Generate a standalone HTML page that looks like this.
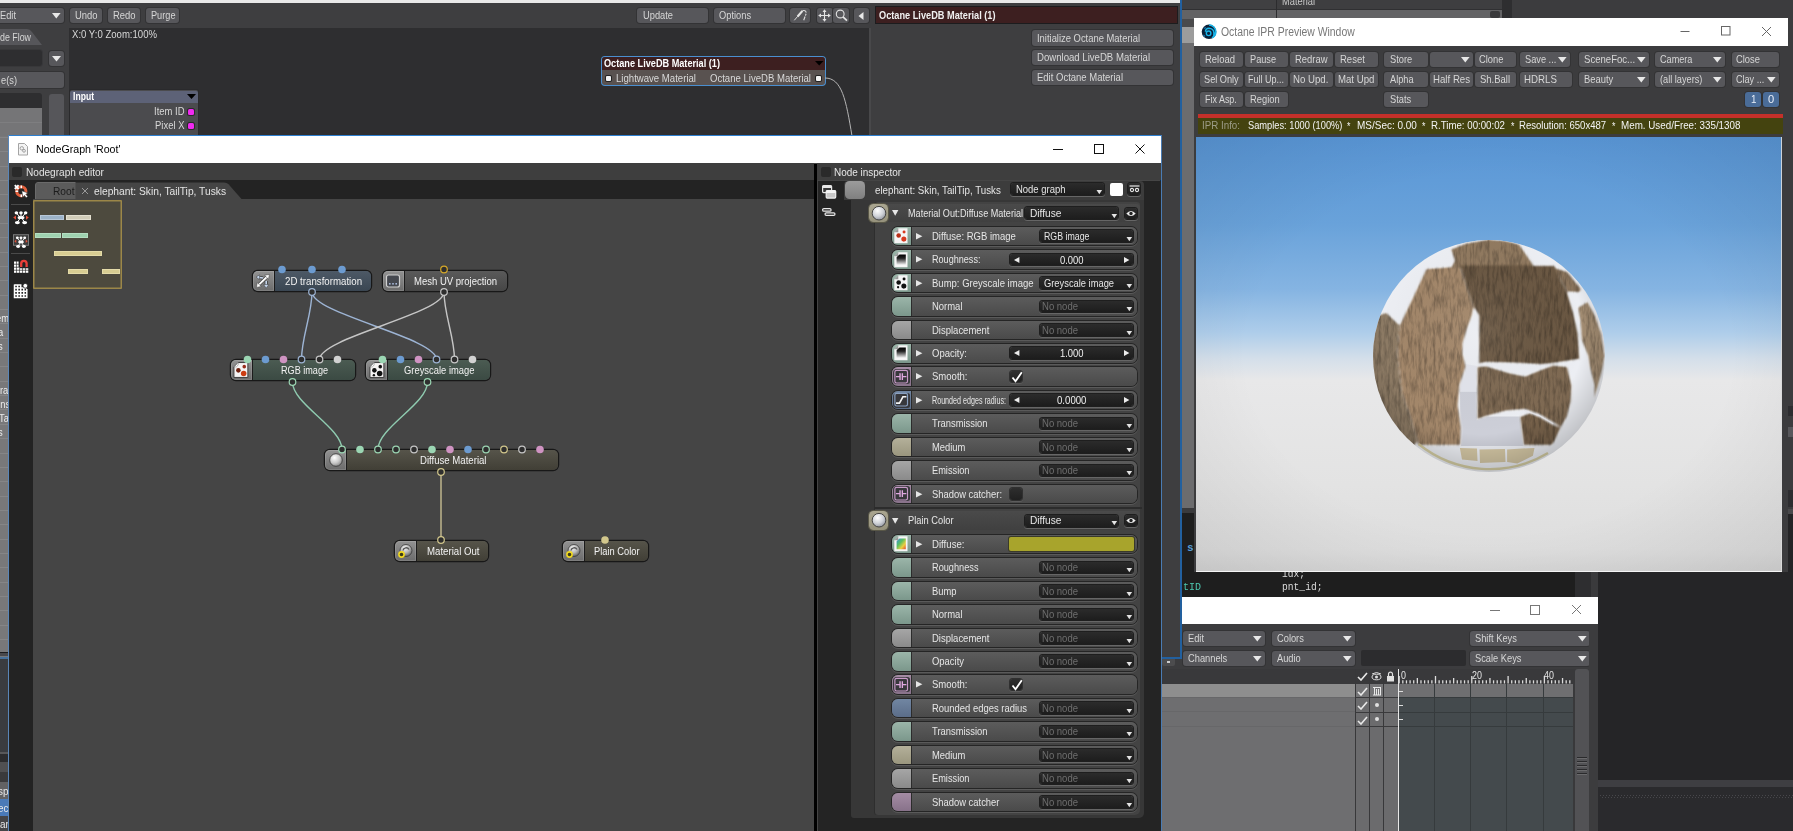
<!DOCTYPE html>
<html><head><meta charset="utf-8"><title>NodeGraph</title>
<style>
html,body{margin:0;padding:0;background:#3c3c3e;overflow:hidden}
html{width:1793px;height:831px}
body{width:1793px;height:831px;position:relative;overflow:hidden;font-family:"Liberation Sans",sans-serif;font-size:11px;color:#ddd}
.a{position:absolute;display:block}
.t{position:absolute;white-space:pre;transform-origin:0 50%}
</style></head><body>
<div class="a" style="left:1182px;top:0px;width:611px;height:831px;background:#3c3c3e;"></div>
<div class="a" style="left:1182px;top:0px;width:94px;height:8.5px;background:#404042;"></div>
<div class="a" style="left:1276px;top:0px;width:226px;height:8.5px;background:#3e3e40;"></div>
<div class="a" style="left:1182px;top:8.5px;width:320px;height:1px;background:#303032;"></div>
<div class="a" style="left:1182px;top:9.5px;width:320px;height:9px;background:#636365;"></div>
<div class="a" style="left:1276px;top:0px;width:1px;height:19px;background:#2c2c2e;"></div>
<div class="a" style="left:1490px;top:11px;width:10px;height:7px;background:#3a3a3c;border-radius:2px;"></div>
<div class="a" style="left:1502px;top:0px;width:10px;height:19px;background:#2e2e30;"></div>
<span class="t" style="left:1282px;top:-6.28px;font-size:11px;line-height:15px;color:#c8c8c8;transform:scaleX(0.845);">Material</span>
<div class="a" style="left:1182px;top:19px;width:12px;height:8px;background:#4a4a4c;"></div>
<div class="a" style="left:1182px;top:27px;width:12px;height:16px;background:#9c9c9c;"></div>
<div class="a" style="left:1182px;top:43px;width:12px;height:465px;background:#6c6c6e;"></div>
<div class="a" style="left:1182px;top:508px;width:12px;height:5px;background:#3a3a3c;"></div>
<div class="a" style="left:1182px;top:513px;width:14px;height:85px;background:#1e1e1e;"></div>
<div class="a" style="left:1182px;top:572px;width:408px;height:26px;background:#1e1e1e;"></div>
<div class="a" style="left:1575px;top:572px;width:16px;height:26px;background:#2e2e30;"></div>
<div class="a" style="left:1591px;top:572px;width:7px;height:26px;background:#3a3a3c;"></div>
<span class="t" style="left:1187px;top:540.72px;font-size:11px;line-height:15px;color:#569cd6;font-family:'Liberation Mono',monospace;font-weight:bold;">s</span>
<span class="t" style="left:1182.5px;top:580.22px;font-size:11px;line-height:15px;color:#4ec9b0;font-family:'Liberation Mono',monospace;transform:scaleX(0.909);">tID</span>
<span class="t" style="left:1281.5px;top:566.72px;font-size:11px;line-height:15px;color:#dcdcdc;font-family:'Liberation Mono',monospace;transform:scaleX(0.871);">idx;</span>
<span class="t" style="left:1281.5px;top:580.22px;font-size:11px;line-height:15px;color:#dcdcdc;font-family:'Liberation Mono',monospace;transform:scaleX(0.876);">pnt_id;</span>
<div class="a" style="left:1788px;top:406px;width:5px;height:10px;background:#2d2d30;"></div>
<div class="a" style="left:1788px;top:427px;width:5px;height:10px;background:#58585c;"></div>
<div class="a" style="left:1788px;top:490px;width:5px;height:17px;background:#2d2d30;"></div>
<div class="a" style="left:1788px;top:508.5px;width:5px;height:5.5px;background:#4a4a4c;"></div>
<div class="a" style="left:1788px;top:514px;width:5px;height:60px;background:#242426;"></div>
<div class="a" style="left:1598px;top:572px;width:195px;height:259px;background:#252527;"></div>
<div class="a" style="left:1598px;top:779.5px;width:195px;height:7px;background:#3e3e42;"></div>
<div class="a" style="left:1598px;top:786.5px;width:195px;height:44.5px;background:#2a2a2d;"></div>
<div class="a" style="left:1600px;top:795px;width:193px;height:1px;background:transparent;background-image:repeating-linear-gradient(90deg,#47474b 0 1px,transparent 1px 3px);"></div>
<div class="a" style="left:1601.5px;top:797px;width:191.5px;height:1px;background:transparent;background-image:repeating-linear-gradient(90deg,#47474b 0 1px,transparent 1px 3px);"></div>
<div class="a" style="left:1150px;top:597px;width:448px;height:234px;background:#3c3c3e;"></div>
<div class="a" style="left:1150px;top:597px;width:448px;height:27px;background:#fff;"></div>
<svg class="a" style="left:1480px;top:600px" width="110" height="20"><g stroke="#777" stroke-width="1" fill="none"><path d="M10 10.5H20"/><rect x="50.5" y="5.5" width="9" height="9"/><path d="M92 5L101 14M101 5L92 14"/></g></svg>
<div class="a" style="left:1182.5px;top:631px;width:82px;height:15px;background:#57575b;border-radius:3px;box-shadow:0 0 0 1px #333335;"></div><span class="t" style="left:1187.5px;top:631.27px;font-size:11px;line-height:15px;color:#d6d6d6;transform:scaleX(0.845);">Edit</span><svg class="a" style="left:1252.6px;top:636.1px" width="9" height="6"><path d="M0 0H8.600L4.300 5.400Z" fill="#e8e8e8"/></svg>
<div class="a" style="left:1272px;top:631px;width:82.5px;height:15px;background:#57575b;border-radius:3px;box-shadow:0 0 0 1px #333335;"></div><span class="t" style="left:1277px;top:631.27px;font-size:11px;line-height:15px;color:#d6d6d6;transform:scaleX(0.845);">Colors</span><svg class="a" style="left:1342.6px;top:636.1px" width="9" height="6"><path d="M0 0H8.600L4.300 5.400Z" fill="#e8e8e8"/></svg>
<div class="a" style="left:1470px;top:631px;width:120px;height:15px;background:#57575b;border-radius:3px;box-shadow:0 0 0 1px #333335;"></div><span class="t" style="left:1475px;top:631.27px;font-size:11px;line-height:15px;color:#d6d6d6;transform:scaleX(0.845);">Shift Keys</span><svg class="a" style="left:1578.1px;top:636.1px" width="9" height="6"><path d="M0 0H8.600L4.300 5.400Z" fill="#e8e8e8"/></svg>
<div class="a" style="left:1182.5px;top:651px;width:82px;height:15px;background:#57575b;border-radius:3px;box-shadow:0 0 0 1px #333335;"></div><span class="t" style="left:1187.5px;top:651.27px;font-size:11px;line-height:15px;color:#d6d6d6;transform:scaleX(0.845);">Channels</span><svg class="a" style="left:1252.6px;top:656.1px" width="9" height="6"><path d="M0 0H8.600L4.300 5.400Z" fill="#e8e8e8"/></svg>
<div class="a" style="left:1272px;top:651px;width:82.5px;height:15px;background:#57575b;border-radius:3px;box-shadow:0 0 0 1px #333335;"></div><span class="t" style="left:1277px;top:651.27px;font-size:11px;line-height:15px;color:#d6d6d6;transform:scaleX(0.845);">Audio</span><svg class="a" style="left:1342.6px;top:656.1px" width="9" height="6"><path d="M0 0H8.600L4.300 5.400Z" fill="#e8e8e8"/></svg>
<div class="a" style="left:1470px;top:651px;width:120px;height:15px;background:#57575b;border-radius:3px;box-shadow:0 0 0 1px #333335;"></div><span class="t" style="left:1475px;top:651.27px;font-size:11px;line-height:15px;color:#d6d6d6;transform:scaleX(0.845);">Scale Keys</span><svg class="a" style="left:1578.1px;top:656.1px" width="9" height="6"><path d="M0 0H8.600L4.300 5.400Z" fill="#e8e8e8"/></svg>
<div class="a" style="left:1361px;top:650px;width:105px;height:16px;background:#2c2c2e;border-radius:2px;"></div>
<div class="a" style="left:1162px;top:655px;width:13px;height:11px;background:#4c4c4e;border-radius:2px;"></div>
<div class="a" style="left:1167px;top:661px;width:3px;height:2px;background:#ccc;"></div>
<div class="a" style="left:1162px;top:669px;width:436px;height:162px;background:#39393b;"></div>
<div class="a" style="left:1162px;top:684px;width:194px;height:147px;background:#6e6e70;"></div>
<div class="a" style="left:1162px;top:684px;width:194px;height:13.5px;background:#8e8e8e;"></div>
<div class="a" style="left:1162px;top:697px;width:194px;height:1px;background:#676769;"></div>
<div class="a" style="left:1162px;top:711px;width:194px;height:1px;background:#676769;"></div>
<div class="a" style="left:1162px;top:726px;width:194px;height:1px;background:#676769;"></div>
<div class="a" style="left:1356px;top:684px;width:41.5px;height:147px;background:#6b6b6d;"></div>
<div class="a" style="left:1356px;top:684px;width:41.5px;height:13.5px;background:#757577;"></div>
<div class="a" style="left:1356px;top:697px;width:41.5px;height:1px;background:#3a3a3c;"></div>
<div class="a" style="left:1356px;top:711.5px;width:41.5px;height:1px;background:#3a3a3c;"></div>
<div class="a" style="left:1356px;top:726px;width:41.5px;height:1px;background:#3a3a3c;"></div>
<div class="a" style="left:1355px;top:669px;width:1px;height:162px;background:#38383a;"></div>
<div class="a" style="left:1369px;top:669px;width:1px;height:162px;background:#38383a;"></div>
<div class="a" style="left:1383px;top:669px;width:1px;height:162px;background:#38383a;"></div>
<div class="a" style="left:1398px;top:684px;width:174.5px;height:147px;background:#444a4d;"></div>
<div class="a" style="left:1398px;top:684px;width:174.5px;height:13.5px;background:#6f6f71;"></div>
<div class="a" style="left:1433.8px;top:684px;width:1px;height:147px;background:#363b3d;"></div>
<div class="a" style="left:1470.1px;top:684px;width:1px;height:147px;background:#363b3d;"></div>
<div class="a" style="left:1506.4px;top:684px;width:1px;height:147px;background:#363b3d;"></div>
<div class="a" style="left:1542.7px;top:684px;width:1px;height:147px;background:#363b3d;"></div>
<div class="a" style="left:1398px;top:697px;width:174.5px;height:1px;background:#363b3d;"></div>
<div class="a" style="left:1398px;top:711.5px;width:174.5px;height:1px;background:#363b3d;"></div>
<div class="a" style="left:1398px;top:726px;width:174.5px;height:1px;background:#363b3d;"></div>
<div class="a" style="left:1397.5px;top:669px;width:1.5px;height:162px;background:#e8e8e8;"></div>
<svg class="a" style="left:1398px;top:669px" width="174.500" height="15"><g stroke="#dcdcdc" stroke-width="1.300"><path d="M1.2 7V14.500"/><path d="M4.83 11.3V14.500"/><path d="M8.46 11.3V14.500"/><path d="M12.09 11.3V14.500"/><path d="M15.72 11.3V14.500"/><path d="M19.35 9V14.500"/><path d="M22.98 11.3V14.500"/><path d="M26.61 11.3V14.500"/><path d="M30.24 11.3V14.500"/><path d="M33.87 11.3V14.500"/><path d="M37.5 7V14.500"/><path d="M41.13 11.3V14.500"/><path d="M44.76 11.3V14.500"/><path d="M48.39 11.3V14.500"/><path d="M52.02 11.3V14.500"/><path d="M55.65 9V14.500"/><path d="M59.28 11.3V14.500"/><path d="M62.91 11.3V14.500"/><path d="M66.54 11.3V14.500"/><path d="M70.17 11.3V14.500"/><path d="M73.8 7V14.500"/><path d="M77.43 11.3V14.500"/><path d="M81.06 11.3V14.500"/><path d="M84.69 11.3V14.500"/><path d="M88.32 11.3V14.500"/><path d="M91.95 9V14.500"/><path d="M95.58 11.3V14.500"/><path d="M99.21 11.3V14.500"/><path d="M102.84 11.3V14.500"/><path d="M106.47 11.3V14.500"/><path d="M110.1 7V14.500"/><path d="M113.73 11.3V14.500"/><path d="M117.36 11.3V14.500"/><path d="M120.99 11.3V14.500"/><path d="M124.62 11.3V14.500"/><path d="M128.25 9V14.500"/><path d="M131.88 11.3V14.500"/><path d="M135.51 11.3V14.500"/><path d="M139.14 11.3V14.500"/><path d="M142.77 11.3V14.500"/><path d="M146.4 7V14.500"/><path d="M150.03 11.3V14.500"/><path d="M153.66 11.3V14.500"/><path d="M157.29 11.3V14.500"/><path d="M160.92 11.3V14.500"/><path d="M164.55 9V14.500"/><path d="M168.18 11.3V14.500"/><path d="M171.81 11.3V14.500"/></g></svg>
<span class="t" style="left:1401px;top:668.36px;font-size:10.5px;line-height:14.5px;color:#e4e4e4;transform:scaleX(0.850);">0</span>
<span class="t" style="left:1472.2px;top:668.36px;font-size:10.5px;line-height:14.5px;color:#e4e4e4;transform:scaleX(0.850);">20</span>
<span class="t" style="left:1544px;top:668.36px;font-size:10.5px;line-height:14.5px;color:#e4e4e4;transform:scaleX(0.850);">40</span>
<svg class="a" style="left:1357px;top:672px" width="11" height="9"><path d="M1 5L4 8L10 1" stroke="#e8e8e8" stroke-width="1.6" fill="none"/></svg>
<svg class="a" style="left:1357px;top:686.5px" width="11" height="9"><path d="M1 5L4 8L10 1" stroke="#e8e8e8" stroke-width="1.6" fill="none"/></svg>
<svg class="a" style="left:1357px;top:701px" width="11" height="9"><path d="M1 5L4 8L10 1" stroke="#e8e8e8" stroke-width="1.6" fill="none"/></svg>
<svg class="a" style="left:1357px;top:715.5px" width="11" height="9"><path d="M1 5L4 8L10 1" stroke="#e8e8e8" stroke-width="1.6" fill="none"/></svg>
<svg class="a" style="left:1371px;top:672px" width="11" height="9"><ellipse cx="5.5" cy="5" rx="4.5" ry="2.8" fill="none" stroke="#ddd" stroke-width="1"/><circle cx="5.5" cy="5" r="1.5" fill="#ddd"/><path d="M1 2Q5.5 -1 10 2" stroke="#ddd" fill="none"/></svg>
<svg class="a" style="left:1386px;top:671px" width="9" height="11"><rect x="1" y="5" width="7" height="5.5" fill="#e0e0e0"/><path d="M2.5 5V3.2A2 2 0 0 1 6.5 3.2V5" stroke="#e0e0e0" fill="none" stroke-width="1.2"/></svg>
<svg class="a" style="left:1372px;top:686px" width="10" height="10"><path d="M1 1.5H9M2.5 1.5V9M4.5 3V9M6.5 3V9M8.5 1.5V9M1 9H9" stroke="#e8e8e8" fill="none"/></svg>
<div class="a" style="left:1374.5px;top:702.5px;width:4px;height:4px;background:#e0e0e0;border-radius:2px;"></div>
<div class="a" style="left:1374.5px;top:717px;width:4px;height:4px;background:#e0e0e0;border-radius:2px;"></div>
<div class="a" style="left:1399px;top:690.5px;width:4px;height:1px;background:#ddd;"></div>
<div class="a" style="left:1399px;top:704.5px;width:4px;height:1px;background:#ddd;"></div>
<div class="a" style="left:1399px;top:719px;width:4px;height:1px;background:#ddd;"></div>
<div class="a" style="left:1575px;top:669px;width:14px;height:162px;background:#525255;border-radius:3px 3px 0 0;"></div>
<div class="a" style="left:1577px;top:757px;width:10px;height:1px;background:#2a2a2c;"></div>
<div class="a" style="left:1577px;top:758px;width:10px;height:1px;background:#6a6a6c;"></div>
<div class="a" style="left:1577px;top:761px;width:10px;height:1px;background:#2a2a2c;"></div>
<div class="a" style="left:1577px;top:762px;width:10px;height:1px;background:#6a6a6c;"></div>
<div class="a" style="left:1577px;top:765px;width:10px;height:1px;background:#2a2a2c;"></div>
<div class="a" style="left:1577px;top:766px;width:10px;height:1px;background:#6a6a6c;"></div>
<div class="a" style="left:1577px;top:769px;width:10px;height:1px;background:#2a2a2c;"></div>
<div class="a" style="left:1577px;top:770px;width:10px;height:1px;background:#6a6a6c;"></div>
<div class="a" style="left:1577px;top:773px;width:10px;height:1px;background:#2a2a2c;"></div>
<div class="a" style="left:1577px;top:774px;width:10px;height:1px;background:#6a6a6c;"></div>
<div class="a" style="left:1589px;top:624px;width:9px;height:207px;background:#3c3c3e;"></div>
<div class="a" style="left:0px;top:0px;width:1182px;height:659px;background:#3e3e40;"></div>
<div class="a" style="left:0px;top:0px;width:1181px;height:2.5px;background:#e9e9e9;"></div>
<div class="a" style="left:1180px;top:0px;width:2px;height:659px;background:#22609f;"></div>
<div class="a" style="left:0px;top:656.5px;width:1182px;height:2.5px;background:#22609f;"></div>
<div class="a" style="left:69px;top:28px;width:800px;height:630px;background:#2e2e30;"></div>
<div class="a" style="left:869px;top:28px;width:2px;height:630px;background:#48484a;"></div>
<span class="t" style="left:72px;top:27.22px;font-size:11px;line-height:15px;color:#d8d8d8;transform:scaleX(0.871);">X:0 Y:0 Zoom:100%</span>
<div class="a" style="left:-3px;top:8px;width:67px;height:15px;background:#57575b;border-radius:3px;box-shadow:0 0 0 1px #333335;"></div><span class="t" style="left:0px;top:8.27px;font-size:11px;line-height:15px;color:#d6d6d6;transform:scaleX(0.845);">Edit</span><svg class="a" style="left:52.1px;top:13.1px" width="9" height="6"><path d="M0 0H8.600L4.300 5.400Z" fill="#e8e8e8"/></svg>
<div class="a" style="left:70px;top:8px;width:32px;height:15px;background:#57575b;border-radius:3px;box-shadow:0 0 0 1px #333335;"></div><span class="t" style="left:75px;top:8.27px;font-size:11px;line-height:15px;color:#d6d6d6;transform:scaleX(0.856);">Undo</span>
<div class="a" style="left:108px;top:8px;width:32px;height:15px;background:#57575b;border-radius:3px;box-shadow:0 0 0 1px #333335;"></div><span class="t" style="left:113px;top:8.27px;font-size:11px;line-height:15px;color:#d6d6d6;transform:scaleX(0.856);">Redo</span>
<div class="a" style="left:146px;top:8px;width:33px;height:15px;background:#57575b;border-radius:3px;box-shadow:0 0 0 1px #333335;"></div><span class="t" style="left:151px;top:8.27px;font-size:11px;line-height:15px;color:#d6d6d6;transform:scaleX(0.834);">Purge</span>
<svg class="a" style="left:0;top:29px" width="44" height="17"><path d="M0 0H27Q30 0 32 3L42 16H0Z" fill="#56565a"/></svg>
<span class="t" style="left:-0.5px;top:29.72px;font-size:11px;line-height:15px;color:#d6d6d6;transform:scaleX(0.805);">de Flow</span>
<div class="a" style="left:-3px;top:50px;width:45px;height:16px;background:#2e2e30;border-radius:3px;box-shadow:0 0 0 1px #38383a;"></div>
<div class="a" style="left:49px;top:51px;width:15px;height:15px;background:#57575b;border-radius:3px;box-shadow:0 0 0 1px #333335;"></div>
<svg class="a" style="left:52px;top:56px" width="9" height="6"><path d="M0 0H9L4.5 5.5Z" fill="#e8e8e8"/></svg>
<div class="a" style="left:-3px;top:72px;width:67px;height:16px;background:#57575b;border-radius:3px;box-shadow:0 0 0 1px #333335;"></div><span class="t" style="left:0.5px;top:72.77px;font-size:11px;line-height:15px;color:#d6d6d6;transform:scaleX(0.845);">e(s)</span>
<div class="a" style="left:-3px;top:93px;width:45px;height:45px;background:#2e2e30;border-radius:3px 3px 0 0;"></div>
<div class="a" style="left:0px;top:108px;width:42px;height:30px;background:#757577;"></div>
<div class="a" style="left:0px;top:122px;width:42px;height:1px;background:#7e7e80;"></div>
<div class="a" style="left:49px;top:94px;width:15px;height:44px;background:#56565a;border-radius:3px 3px 0 0;"></div>
<div class="a" style="left:70px;top:90px;width:127.5px;height:48px;background:#4b4b4e;border-radius:2px;box-shadow:0 0 0 1px #2a2a2c;"></div>
<div class="a" style="left:70px;top:91px;width:127.5px;height:11.5px;background:#5d6277;border-radius:2px 2px 0 0;"></div>
<span class="t" style="left:72.5px;top:89.22px;font-size:11px;line-height:15px;color:#fff;font-weight:bold;transform:scaleX(0.781);">Input</span>
<svg class="a" style="left:186.5px;top:94px" width="9" height="6"><path d="M0 0H9L4.5 5Z" fill="#000"/></svg>
<span class="t" style="left:154px;top:103.72px;font-size:11px;line-height:15px;color:#d8d8d8;transform:scaleX(0.860);">Item ID</span>
<span class="t" style="left:155px;top:117.72px;font-size:11px;line-height:15px;color:#d8d8d8;transform:scaleX(0.861);">Pixel X</span>
<div class="a" style="left:188px;top:108.5px;width:6px;height:6px;background:#f02af0;border-radius:1.5px;box-shadow:0 0 0 1px #2a2a2c;"></div>
<div class="a" style="left:188px;top:122.5px;width:6px;height:6px;background:#f02af0;border-radius:1.5px;box-shadow:0 0 0 1px #2a2a2c;"></div>
<div class="a" style="left:637px;top:8px;width:70.5px;height:15px;background:#57575b;border-radius:3px;box-shadow:0 0 0 1px #333335;"></div><span class="t" style="left:643px;top:8.27px;font-size:11px;line-height:15px;color:#d6d6d6;transform:scaleX(0.845);">Update</span>
<div class="a" style="left:714px;top:8px;width:70.5px;height:15px;background:#57575b;border-radius:3px;box-shadow:0 0 0 1px #333335;"></div><span class="t" style="left:719px;top:8.27px;font-size:11px;line-height:15px;color:#d6d6d6;transform:scaleX(0.845);">Options</span>
<div class="a" style="left:790px;top:8px;width:20px;height:15px;background:#57575b;border-radius:3px;box-shadow:0 0 0 1px #333335;"></div>
<svg class="a" style="left:793px;top:9px" width="15" height="13"><path d="M1.300 11.300L4.800 7.200" stroke="#dcdcdc" stroke-width="1" fill="none"/><path d="M4.600 7.500L9.400 1.900" stroke="#e4e4e4" stroke-width="2.200" fill="none"/><path d="M9.400 1.700Q13 0.600 13.300 4.200L10.700 11.200" stroke="#dcdcdc" stroke-width="1.100" fill="none" stroke-dasharray="5 1 2 1"/></svg>
<div class="a" style="left:816.5px;top:8px;width:16px;height:15px;background:#57575b;border-radius:3px;box-shadow:0 0 0 1px #333335;"></div>
<svg class="a" style="left:818px;top:9px" width="13" height="13"><path d="M6.500 1.500V11.500M1.500 6.500H11.500" stroke="#e4e4e4" stroke-width="1.100"/><path d="M6.500 0.200L4.500 3H8.500ZM6.500 12.800L4.500 10H8.500ZM0.200 6.500L3 4.500V8.500ZM12.800 6.500L10 4.500V8.500Z" fill="#e4e4e4"/></svg>
<div class="a" style="left:833px;top:8px;width:16px;height:15px;background:#57575b;border-radius:3px;box-shadow:0 0 0 1px #333335;"></div>
<svg class="a" style="left:834.500px;top:9px" width="13" height="13"><circle cx="5.200" cy="5" r="3.900" stroke="#e0e0e0" stroke-width="1.100" fill="none"/><path d="M8 7.900L12 11.600" stroke="#e4e4e4" stroke-width="1.700"/></svg>
<div class="a" style="left:854px;top:8px;width:15px;height:15px;background:#57575b;border-radius:3px;box-shadow:0 0 0 1px #333335;"></div>
<svg class="a" style="left:858px;top:11.500px" width="6" height="9"><path d="M5.500 0V8L0.500 4Z" fill="#e8e8e8"/></svg>
<div class="a" style="left:875.7px;top:7.3px;width:301.3px;height:16px;background:#3d1f20;box-shadow:0 0 0 1px #1c1c1e;"></div>
<span class="t" style="left:879px;top:7.72px;font-size:11px;line-height:15px;color:#f0f0f0;font-weight:bold;transform:scaleX(0.836);">Octane LiveDB Material (1)</span>
<div class="a" style="left:1031.5px;top:30px;width:141.5px;height:15.5px;background:#57575b;border-radius:3px;box-shadow:0 0 0 1px #333335;"></div><span class="t" style="left:1037px;top:30.52px;font-size:11px;line-height:15px;color:#d6d6d6;transform:scaleX(0.855);">Initialize Octane Material</span>
<div class="a" style="left:1031.5px;top:49.7px;width:141.5px;height:15.5px;background:#57575b;border-radius:3px;box-shadow:0 0 0 1px #333335;"></div><span class="t" style="left:1037px;top:50.22px;font-size:11px;line-height:15px;color:#d6d6d6;transform:scaleX(0.872);">Download LiveDB Material</span>
<div class="a" style="left:1031.5px;top:69.8px;width:141.5px;height:15.5px;background:#57575b;border-radius:3px;box-shadow:0 0 0 1px #333335;"></div><span class="t" style="left:1037px;top:70.32px;font-size:11px;line-height:15px;color:#d6d6d6;transform:scaleX(0.863);">Edit Octane Material</span>
<div class="a" style="left:601.5px;top:56.5px;width:223px;height:28px;background:#595250;border-radius:3px;box-shadow:0 0 0 1px #4a8fd0;"></div>
<div class="a" style="left:601.5px;top:56.5px;width:223px;height:13.5px;background:#3d1f20;border-radius:3px 3px 0 0;"></div>
<span class="t" style="left:604px;top:56.02px;font-size:11px;line-height:15px;color:#fff;font-weight:bold;transform:scaleX(0.832);">Octane LiveDB Material (1)</span>
<svg class="a" style="left:814.5px;top:61px" width="9" height="5"><path d="M0 0H8.5L4.2 4.5Z" fill="#000"/></svg>
<span class="t" style="left:615.5px;top:70.72px;font-size:11px;line-height:15px;color:#d8d8d8;transform:scaleX(0.872);">Lightwave Material</span>
<span class="t" style="left:710px;top:70.72px;font-size:11px;line-height:15px;color:#d8d8d8;transform:scaleX(0.869);">Octane LiveDB Material</span>
<div class="a" style="left:605.5px;top:75.5px;width:5px;height:5px;background:#f2f2f2;border-radius:1px;box-shadow:0 0 0 1px #222;"></div>
<div class="a" style="left:816px;top:75.5px;width:5px;height:5px;background:#f2f2f2;border-radius:1px;box-shadow:0 0 0 1px #222;"></div>
<svg class="a" style="left:820px;top:70px" width="40" height="70"><path d="M5 8C22 8 26 30 32 66" stroke="#b4b4b4" stroke-width="1" fill="none"/></svg>
<div class="a" style="left:0px;top:136px;width:9px;height:521px;background:#78787a;"></div>
<div class="a" style="left:0px;top:136.8px;width:9px;height:1px;background:#858587;"></div>
<div class="a" style="left:0px;top:151.15px;width:9px;height:1px;background:#858587;"></div>
<div class="a" style="left:0px;top:165.5px;width:9px;height:1px;background:#858587;"></div>
<div class="a" style="left:0px;top:179.85px;width:9px;height:1px;background:#858587;"></div>
<div class="a" style="left:0px;top:194.2px;width:9px;height:1px;background:#858587;"></div>
<div class="a" style="left:0px;top:208.55px;width:9px;height:1px;background:#858587;"></div>
<div class="a" style="left:0px;top:222.9px;width:9px;height:1px;background:#858587;"></div>
<div class="a" style="left:0px;top:237.25px;width:9px;height:1px;background:#858587;"></div>
<div class="a" style="left:0px;top:251.6px;width:9px;height:1px;background:#858587;"></div>
<div class="a" style="left:0px;top:265.95px;width:9px;height:1px;background:#858587;"></div>
<div class="a" style="left:0px;top:280.3px;width:9px;height:1px;background:#858587;"></div>
<div class="a" style="left:0px;top:294.65px;width:9px;height:1px;background:#858587;"></div>
<div class="a" style="left:0px;top:309px;width:9px;height:1px;background:#858587;"></div>
<div class="a" style="left:0px;top:323.35px;width:9px;height:1px;background:#858587;"></div>
<div class="a" style="left:0px;top:337.7px;width:9px;height:1px;background:#858587;"></div>
<div class="a" style="left:0px;top:352.05px;width:9px;height:1px;background:#858587;"></div>
<div class="a" style="left:0px;top:366.4px;width:9px;height:1px;background:#858587;"></div>
<div class="a" style="left:0px;top:380.75px;width:9px;height:1px;background:#858587;"></div>
<div class="a" style="left:0px;top:395.1px;width:9px;height:1px;background:#858587;"></div>
<div class="a" style="left:0px;top:409.45px;width:9px;height:1px;background:#858587;"></div>
<div class="a" style="left:0px;top:423.8px;width:9px;height:1px;background:#858587;"></div>
<div class="a" style="left:0px;top:438.15px;width:9px;height:1px;background:#858587;"></div>
<div class="a" style="left:0px;top:452.5px;width:9px;height:1px;background:#858587;"></div>
<div class="a" style="left:0px;top:466.85px;width:9px;height:1px;background:#858587;"></div>
<div class="a" style="left:0px;top:481.2px;width:9px;height:1px;background:#858587;"></div>
<div class="a" style="left:0px;top:495.55px;width:9px;height:1px;background:#858587;"></div>
<div class="a" style="left:0px;top:509.9px;width:9px;height:1px;background:#858587;"></div>
<div class="a" style="left:0px;top:524.25px;width:9px;height:1px;background:#858587;"></div>
<div class="a" style="left:0px;top:538.6px;width:9px;height:1px;background:#858587;"></div>
<div class="a" style="left:0px;top:552.95px;width:9px;height:1px;background:#858587;"></div>
<div class="a" style="left:0px;top:567.3px;width:9px;height:1px;background:#858587;"></div>
<div class="a" style="left:0px;top:581.65px;width:9px;height:1px;background:#858587;"></div>
<div class="a" style="left:0px;top:596px;width:9px;height:1px;background:#858587;"></div>
<div class="a" style="left:0px;top:610.35px;width:9px;height:1px;background:#858587;"></div>
<div class="a" style="left:0px;top:624.7px;width:9px;height:1px;background:#858587;"></div>
<div class="a" style="left:0px;top:639.05px;width:9px;height:1px;background:#858587;"></div>
<div class="a" style="left:0px;top:653.4px;width:9px;height:1px;background:#858587;"></div>
<span class="t" style="left:-4.49px;top:310.72px;font-size:11px;line-height:15px;color:#ececec;transform:scaleX(0.850);">em</span>
<span class="t" style="left:-2.01px;top:324.72px;font-size:11px;line-height:15px;color:#ececec;transform:scaleX(0.850);">a</span>
<span class="t" style="left:-1.88px;top:339.22px;font-size:11px;line-height:15px;color:#ececec;transform:scaleX(0.850);">s</span>
<span class="t" style="left:0.19px;top:382.72px;font-size:11px;line-height:15px;color:#ececec;transform:scaleX(0.850);">ra</span>
<span class="t" style="left:-5.09px;top:396.72px;font-size:11px;line-height:15px;color:#ececec;transform:scaleX(0.850);">ons</span>
<span class="t" style="left:-1.38px;top:410.72px;font-size:11px;line-height:15px;color:#ececec;transform:scaleX(0.850);">Ta</span>
<span class="t" style="left:-1.88px;top:425.22px;font-size:11px;line-height:15px;color:#ececec;transform:scaleX(0.850);">s</span>
<div class="a" style="left:0px;top:652px;width:9px;height:1.1px;background:#1c1c1e;"></div>
<div class="a" style="left:0px;top:653.1px;width:9px;height:3.4px;background:#48484c;"></div>
<div class="a" style="left:0px;top:656.5px;width:9px;height:2.4px;background:#46719c;"></div>
<div class="a" style="left:0px;top:659px;width:9px;height:172px;background:#3a3c40;"></div>
<div class="a" style="left:0px;top:752px;width:9px;height:2px;background:#58585a;"></div>
<div class="a" style="left:0px;top:754px;width:9px;height:8px;background:#2c2c2e;"></div>
<div class="a" style="left:0px;top:762px;width:9px;height:10px;background:#505052;"></div>
<div class="a" style="left:0px;top:772px;width:9px;height:10px;background:#3a3a3c;"></div>
<div class="a" style="left:0px;top:782px;width:9px;height:17px;background:#626264;"></div>
<div class="a" style="left:0px;top:799px;width:9px;height:17px;background:#4a7ab8;"></div>
<div class="a" style="left:0px;top:816px;width:9px;height:15px;background:#454547;"></div>
<span class="t" style="left:-1.96px;top:783.72px;font-size:11px;line-height:15px;color:#e8e8e8;transform:scaleX(0.900);">sp</span>
<span class="t" style="left:-1.96px;top:800.72px;font-size:11px;line-height:15px;color:#e8e8e8;transform:scaleX(0.900);">ec</span>
<span class="t" style="left:-0.3px;top:816.72px;font-size:11px;line-height:15px;color:#e8e8e8;transform:scaleX(0.900);">ar</span>
<div class="a" style="left:8px;top:135px;width:1154px;height:696px;background:#454545;box-shadow:0 0 0 0 #000;"></div>
<div class="a" style="left:8px;top:135px;width:1154px;height:1px;background:#2d7fd0;"></div>
<div class="a" style="left:7.8px;top:135px;width:1.3px;height:696px;background:#5a86b8;"></div>
<div class="a" style="left:9px;top:163px;width:1.2px;height:668px;background:#0e2c4e;"></div>
<div class="a" style="left:1159.8px;top:163px;width:1.3px;height:668px;background:#0e2c4e;"></div>
<div class="a" style="left:1161px;top:135px;width:1.2px;height:696px;background:#4a7cb4;"></div>
<div class="a" style="left:9px;top:136px;width:1152px;height:27.2px;background:#fff;"></div>
<svg class="a" style="left:18px;top:143px" width="11" height="13"><path d="M0.500 0.500H6.500L9.500 3.500V12H0.500Z" fill="#f4f4f4" stroke="#a4a4a4"/><circle cx="3.800" cy="5.300" r="1.700" fill="none" stroke="#a0a0a0"/><circle cx="6" cy="7.800" r="1.400" fill="none" stroke="#a0a0a0"/></svg>
<span class="t" style="left:35.5px;top:142.12px;font-size:11px;line-height:15px;color:#000;transform:scaleX(0.967);">NodeGraph &#x27;Root&#x27;</span>
<svg class="a" style="left:1040px;top:138px" width="115" height="24"><g stroke="#111" stroke-width="1" fill="none"><path d="M13 11.5H23"/><rect x="54.5" y="6.5" width="9" height="9"/><path d="M95.5 6.5L104.5 15.5M104.5 6.5L95.5 15.5"/></g></svg>
<div class="a" style="left:9px;top:163.2px;width:805px;height:17px;background:#3e3e3e;"></div>
<div class="a" style="left:12px;top:166.5px;width:10px;height:10px;background:#2a2a2a;border-radius:2px;"></div>
<span class="t" style="left:25.7px;top:164.76px;font-size:10.5px;line-height:14.5px;color:#e4e4e4;transform:scaleX(0.961);">Nodegraph editor</span>
<div class="a" style="left:9px;top:180px;width:805px;height:19.2px;background:#232323;"></div>
<div class="a" style="left:9px;top:181px;width:23.5px;height:650px;background:#232323;"></div>
<svg class="a" style="left:33px;top:182px" width="220" height="18"><path d="M2.5 17V3Q2.5 0.5 5 0.5H191Q194 0.5 195.500 2.200L208.500 17Z" fill="#454545"/><path d="M2.5 17V3Q2.5 1 5 1H42.5V17Z" fill="#5b5b5b"/><path d="M2.5 17V3Q2.5 0.5 5 0.5H42.5" fill="none" stroke="#6a6a6a"/></svg>
<span class="t" style="left:52.5px;top:183.96px;font-size:10.5px;line-height:14.5px;color:#1c1c1c;transform:scaleX(0.969);">Root</span>
<svg class="a" style="left:80.5px;top:187px" width="8" height="8"><path d="M1 1L7 7M7 1L1 7" stroke="#9a9a9a" stroke-width="1"/></svg>
<span class="t" style="left:94px;top:183.96px;font-size:10.5px;line-height:14.5px;color:#e4e4e4;transform:scaleX(0.975);">elephant: Skin, TailTip, Tusks</span>
<div class="a" style="left:33px;top:200px;width:89px;height:88.5px;background:#4d4a3e;box-shadow:inset 0 0 0 1.500px #9c8748;border-radius:1px;"></div>
<div class="a" style="left:40px;top:215px;width:24px;height:5px;background:#9db3c8;box-shadow:inset 0 0 0 1px #b8c8d8;"></div>
<div class="a" style="left:66px;top:215px;width:25px;height:5px;background:#d2cdb8;box-shadow:inset 0 0 0 1px #e4e0d0;"></div>
<div class="a" style="left:35px;top:233px;width:25.5px;height:5px;background:#9fd2b0;box-shadow:inset 0 0 0 1px #b4dec2;"></div>
<div class="a" style="left:62px;top:233px;width:26px;height:5px;background:#9fd2b0;box-shadow:inset 0 0 0 1px #b4dec2;"></div>
<div class="a" style="left:54px;top:251px;width:48px;height:5px;background:#d8cd92;box-shadow:inset 0 0 0 1px #e4dba8;"></div>
<div class="a" style="left:68px;top:269px;width:19.5px;height:5px;background:#d8cd92;box-shadow:inset 0 0 0 1px #e4dba8;"></div>
<div class="a" style="left:102px;top:269px;width:18px;height:5px;background:#d8cd92;box-shadow:inset 0 0 0 1px #e4dba8;"></div>
<svg class="a" style="left:13px;top:183px" width="16" height="16" viewBox="0 0 16 16"><circle cx="8.300" cy="8.300" r="4.600" fill="none" stroke="#e2603c" stroke-width="3"/><path d="M8.300 2.500V5.200M8.300 11.400V14M2.500 8.300H5.200" stroke="#fff" stroke-width="1.500"/><path d="M1.800 2.200L5.600 6M5.600 2.200L1.800 6" stroke="#fff" stroke-width="1.900"/><path d="M8.800 7.800L15 10L12.800 11.200L14.800 13.600L13.200 14.800L11.400 12.400L9.800 14.200Z" fill="#fff" stroke="#232323" stroke-width=".5"/></svg>
<div class="a" style="left:11px;top:203.5px;width:19px;height:1px;background:#4a4a4a;"></div>
<svg class="a" style="left:13px;top:210px" width="16" height="16" viewBox="0 0 16 16"><g stroke="#fff" stroke-width="1"><path d="M3.500 3.200L7 7M8 3V7M12.500 3.200L9 7M4.500 12L7 8.500M11.500 12L9 8.500"/></g><g fill="#fff"><ellipse cx="3.400" cy="2.800" rx="1.800" ry="1.600"/><ellipse cx="8" cy="2.800" rx="1.800" ry="1.600"/><ellipse cx="12.600" cy="2.800" rx="1.800" ry="1.600"/><rect x="4.600" y="6.200" width="6.800" height="2.800" rx="1.300"/><ellipse cx="4.400" cy="12.600" rx="2.500" ry="1.600"/><ellipse cx="11.600" cy="12.600" rx="2.500" ry="1.600"/></g><path d="M0.200 7.600L3 5.400V9.800ZM15.800 7.600L13 5.400V9.800Z" fill="#e2503a"/></svg>
<svg class="a" style="left:13px;top:233.5px" width="16" height="16" viewBox="0 0 16 16"><rect x="0.500" y="0.700" width="15" height="10.600" fill="#3c3c3c" stroke="#7a7a7a"/><g transform="translate(1.600 1.400) scale(.8 .88)"><g stroke="#fff" stroke-width="1"><path d="M3.500 3.200L7 7M8 3V7M12.500 3.200L9 7M4.500 12L7 8.500M11.500 12L9 8.500"/></g><g fill="#fff"><ellipse cx="3.400" cy="2.800" rx="1.800" ry="1.600"/><ellipse cx="8" cy="2.800" rx="1.800" ry="1.600"/><ellipse cx="12.600" cy="2.800" rx="1.800" ry="1.600"/><rect x="4.600" y="6.200" width="6.800" height="2.800" rx="1.300"/><ellipse cx="4.400" cy="12.600" rx="2.500" ry="1.600"/><ellipse cx="11.600" cy="12.600" rx="2.500" ry="1.600"/></g></g><path d="M1.300 7.300L3.300 5.600V9ZM14.700 7.300L12.700 5.600V9Z" fill="#e2503a"/></svg>
<div class="a" style="left:11px;top:252.5px;width:19px;height:1px;background:#4a4a4a;"></div>
<svg class="a" style="left:13px;top:259px" width="16" height="16" viewBox="0 0 16 16"><g fill="#fff"><rect x="1" y="2.500" width="2.400" height="2.300"/><rect x="1" y="5.500" width="2.400" height="2.300"/><rect x="1" y="8.500" width="2.400" height="2.300"/><rect x="1" y="11.500" width="2.400" height="2.300"/><rect x="4" y="11.500" width="2.400" height="2.300"/><rect x="7" y="11.500" width="2.400" height="2.300"/><rect x="10" y="11.500" width="2.400" height="2.300"/><rect x="13" y="11.500" width="2.300" height="2.300"/><rect x="4" y="2.500" width="1.600" height="2.300"/><rect x="4" y="5.500" width="1.600" height="2.300"/><rect x="4" y="8.500" width="2.400" height="2.300"/><rect x="7" y="9.300" width="2.400" height="1.500"/><rect x="10" y="9.300" width="2.400" height="1.500"/><rect x="13" y="9.300" width="2.300" height="1.500"/></g><path d="M8.200 8V4.600A2.700 2.700 0 0 1 13.600 4.600V8" stroke="#ea3e38" stroke-width="2.300" fill="none"/></svg>
<svg class="a" style="left:13px;top:283px" width="16" height="16" viewBox="0 0 16 16"><rect x="1.200" y="2" width="12.600" height="12.300" fill="#232323"/><g stroke="#fff" stroke-width="1.500" fill="none"><path d="M1.500 1.500V14.500H13.800V6"/><path d="M1.500 5H13.800M1.500 8.200H13.800M1.500 11.400H13.800M4.600 1.500V14.500M7.700 1.500V14.500M10.800 4V14.500M1.500 2H8.500"/></g><circle cx="12.300" cy="2.800" r="2.400" fill="#fff" stroke="#232323" stroke-width=".8"/></svg>
<svg class="a" style="left:0;top:0" width="820" height="831"><g fill="none" stroke-width="1.4"><path d="M312 292C312 314 301.5 337.5 301.5 359.5" stroke="#9db4d4"/><path d="M312 292C312 314 436.5 337.5 436.5 359.5" stroke="#9db4d4"/><path d="M444 292C444 314 319.5 337.5 319.5 359.5" stroke="#c6c6c6"/><path d="M444 292C444 314 454.5 337.5 454.5 359.5" stroke="#c6c6c6"/><path d="M292.5 382C292.5 404 342 427.5 342 449.5" stroke="#8fcbb0"/><path d="M427.5 382C427.5 404 378 427.5 378 449.5" stroke="#8fcbb0"/><path d="M441 472V540" stroke="#c8be92"/></g></svg>
<div class="a" style="left:252.7px;top:270.6px;width:118.5px;height:20.6px;background:linear-gradient(#4d5966,#3a4652);border-radius:5px;box-shadow:0 0 0 1.200px #181818;"></div><div class="a" style="left:252.7px;top:270.6px;width:21px;height:20.6px;background:linear-gradient(#929292,#6c6c6c);border-radius:5px 0 0 5px;box-shadow:inset 0 0 0 1px rgba(255,255,255,.12),1px 0 0 #1c1c1c;"></div><svg class="a" style="left:255.2px;top:272.9px;overflow:visible" width="16" height="16" viewBox="0 0 16 16"><g stroke="#3a3a3a" stroke-width="3.200" fill="none" stroke-linejoin="round"><path d="M3.200 12.400L12.600 3.200"/><path d="M8 5L3.500 4.400M11.200 8V12"/></g><path d="M8 5L3.500 4.400M11.200 8V12" stroke="#c4d4ea" stroke-width="1.700" fill="none"/><path d="M1 4L4.700 1.800L4.300 6.600ZM11.200 15.200L8.600 11.500H13.800Z" fill="#c4d4ea" stroke="#3a3a3a" stroke-width=".5"/><path d="M3.200 12.400L12.600 3.200" stroke="#fff" stroke-width="1.900" fill="none"/><path d="M14.400 1.400L9.600 2.300L13.500 6.200ZM1.400 14.400L2.300 9.600L6.200 13.500Z" fill="#fff" stroke="#3a3a3a" stroke-width=".5"/></svg><span class="t" style="left:284.7px;top:274.06px;font-size:10.5px;line-height:14.5px;color:#f2f2f2;transform:scaleX(0.923);">2D transformation</span>
<div class="a" style="left:382.6px;top:270.6px;width:124px;height:20.6px;background:linear-gradient(#5a5a5a,#464646);border-radius:5px;box-shadow:0 0 0 1.200px #181818;"></div><div class="a" style="left:382.6px;top:270.6px;width:21px;height:20.6px;background:linear-gradient(#929292,#6c6c6c);border-radius:5px 0 0 5px;box-shadow:inset 0 0 0 1px rgba(255,255,255,.12),1px 0 0 #1c1c1c;"></div><svg class="a" style="left:385.1px;top:272.9px;overflow:visible" width="16" height="16" viewBox="0 0 16 16"><rect x="1.5" y="2" width="13" height="12" rx="2" fill="#45484f" stroke="#d0d0d0" stroke-width="1.2"/><rect x="4" y="10" width="1.600" height="1.600" fill="#a8b8d8"/><rect x="7.2" y="10" width="1.600" height="1.600" fill="#a8b8d8"/><rect x="10.400" y="10" width="1.600" height="1.600" fill="#a8b8d8"/></svg><span class="t" style="left:414.35px;top:274.06px;font-size:10.5px;line-height:14.5px;color:#f2f2f2;transform:scaleX(0.906);">Mesh UV projection</span>
<div class="a" style="left:230.9px;top:359.9px;width:124px;height:20.6px;background:linear-gradient(#4b5b52,#3b4a43);border-radius:5px;box-shadow:0 0 0 1.200px #181818;"></div><div class="a" style="left:230.9px;top:359.9px;width:21px;height:20.6px;background:linear-gradient(#929292,#6c6c6c);border-radius:5px 0 0 5px;box-shadow:inset 0 0 0 1px rgba(255,255,255,.12),1px 0 0 #1c1c1c;"></div><svg class="a" style="left:233.4px;top:362.2px;overflow:visible" width="16" height="16" viewBox="0 0 16 16"><g transform="translate(-1.700 -1.600) scale(1.200)"><path d="M2.200 5.500L5.800 1.800H13.800V14.200H2.200Z" fill="#f6f4f4" stroke="#3a3a3a" stroke-width=".8"/><path d="M2.400 5.500Q4.500 5.800 5.200 4.500Q6.200 3 5.800 2" fill="#fff" stroke="#888" stroke-width=".5"/><circle cx="10.800" cy="5.200" r="1.500" fill="#9a2e1c"/><circle cx="5.900" cy="8.300" r="1.900" fill="#70200f"/><circle cx="10.300" cy="11" r="2.300" fill="#cc3c12"/></g></svg><span class="t" style="left:280.65px;top:363.36px;font-size:10.5px;line-height:14.5px;color:#f2f2f2;transform:scaleX(0.866);">RGB image</span>
<div class="a" style="left:366.1px;top:359.9px;width:124.3px;height:20.6px;background:linear-gradient(#4b5b52,#3b4a43);border-radius:5px;box-shadow:0 0 0 1.200px #181818;"></div><div class="a" style="left:366.1px;top:359.9px;width:21px;height:20.6px;background:linear-gradient(#929292,#6c6c6c);border-radius:5px 0 0 5px;box-shadow:inset 0 0 0 1px rgba(255,255,255,.12),1px 0 0 #1c1c1c;"></div><svg class="a" style="left:368.6px;top:362.2px;overflow:visible" width="16" height="16" viewBox="0 0 16 16"><g transform="translate(-1.700 -1.600) scale(1.200)"><path d="M2.200 5.500L5.800 1.800H13.800V14.200H2.200Z" fill="#f6f4f4" stroke="#3a3a3a" stroke-width=".8"/><path d="M2.400 5.500Q4.500 5.800 5.200 4.500Q6.200 3 5.800 2" fill="#fff" stroke="#888" stroke-width=".5"/><circle cx="10.800" cy="5.200" r="1.500" fill="#111"/><circle cx="5.900" cy="8.300" r="1.900" fill="#111"/><circle cx="10.300" cy="11" r="2.300" fill="#111"/><circle cx="5.500" cy="12.300" r="1" fill="#111"/></g></svg><span class="t" style="left:404.25px;top:363.36px;font-size:10.5px;line-height:14.5px;color:#f2f2f2;transform:scaleX(0.895);">Greyscale image</span>
<div class="a" style="left:325.4px;top:449.9px;width:232.2px;height:20.6px;background:linear-gradient(#56544a,#413f36);border-radius:5px;box-shadow:0 0 0 1.200px #181818;"></div><div class="a" style="left:325.4px;top:449.9px;width:21px;height:20.6px;background:linear-gradient(#929292,#6c6c6c);border-radius:5px 0 0 5px;box-shadow:inset 0 0 0 1px rgba(255,255,255,.12),1px 0 0 #1c1c1c;"></div><svg class="a" style="left:327.9px;top:452.2px;overflow:visible" width="16" height="16" viewBox="0 0 16 16"><defs><radialGradient id="sg" cx=".38" cy=".32" r=".7"><stop offset="0" stop-color="#fff"/><stop offset=".6" stop-color="#c8c8c8"/><stop offset="1" stop-color="#8a8a8a"/></radialGradient></defs><circle cx="8" cy="8" r="6.300" fill="url(#sg)" stroke="#333" stroke-width=".8"/></svg><span class="t" style="left:419.5px;top:453.36px;font-size:10.5px;line-height:14.5px;color:#f2f2f2;transform:scaleX(0.914);">Diffuse Material</span>
<div class="a" style="left:394.9px;top:540.8px;width:93.5px;height:20.6px;background:linear-gradient(#56544a,#413f36);border-radius:5px;box-shadow:0 0 0 1.200px #181818;"></div><div class="a" style="left:394.9px;top:540.8px;width:21px;height:20.6px;background:linear-gradient(#929292,#6c6c6c);border-radius:5px 0 0 5px;box-shadow:inset 0 0 0 1px rgba(255,255,255,.12),1px 0 0 #1c1c1c;"></div><svg class="a" style="left:397.4px;top:543.1px;overflow:visible" width="16" height="16" viewBox="0 0 16 16"><circle cx="9" cy="7.500" r="6" fill="url(#sg2)" stroke="#3a3a3a" stroke-width=".8"/><path d="M6 7.500A3.200 3.200 0 0 1 12 6.500" stroke="#555" fill="none" stroke-width="1.400"/><circle cx="4.500" cy="11.500" r="2.600" fill="#3a3a1a" stroke="#f0d820" stroke-width="1.600"/><defs><radialGradient id="sg2" cx=".4" cy=".3" r=".7"><stop offset="0" stop-color="#f4f4f4"/><stop offset=".55" stop-color="#b8b8b8"/><stop offset="1" stop-color="#666"/></radialGradient></defs></svg><span class="t" style="left:426.65px;top:544.26px;font-size:10.5px;line-height:14.5px;color:#f2f2f2;transform:scaleX(0.918);">Material Out</span>
<div class="a" style="left:562.7px;top:540.8px;width:85.5px;height:20.6px;background:linear-gradient(#56544a,#413f36);border-radius:5px;box-shadow:0 0 0 1.200px #181818;"></div><div class="a" style="left:562.7px;top:540.8px;width:21px;height:20.6px;background:linear-gradient(#929292,#6c6c6c);border-radius:5px 0 0 5px;box-shadow:inset 0 0 0 1px rgba(255,255,255,.12),1px 0 0 #1c1c1c;"></div><svg class="a" style="left:565.2px;top:543.1px;overflow:visible" width="16" height="16" viewBox="0 0 16 16"><circle cx="9" cy="7.500" r="6" fill="url(#sg3)" stroke="#3a3a3a" stroke-width=".8"/><path d="M6 7.500A3.200 3.200 0 0 1 12 6.500" stroke="#555" fill="none" stroke-width="1.400"/><circle cx="4.500" cy="11.500" r="2.600" fill="#3a3a1a" stroke="#f0d820" stroke-width="1.600"/><defs><radialGradient id="sg3" cx=".4" cy=".3" r=".7"><stop offset="0" stop-color="#f4f4f4"/><stop offset=".55" stop-color="#b8b8b8"/><stop offset="1" stop-color="#666"/></radialGradient></defs></svg><span class="t" style="left:593.95px;top:544.26px;font-size:10.5px;line-height:14.5px;color:#f2f2f2;transform:scaleX(0.886);">Plain Color</span>



































<svg class="a" style="left:0;top:0" width="820" height="831"><circle cx="282" cy="269.5" r="3.800" fill="#6c9bd0"/><circle cx="312" cy="269.5" r="3.800" fill="#6c9bd0"/><circle cx="342" cy="269.5" r="3.800" fill="#6c9bd0"/><circle cx="312" cy="292" r="3.300" fill="#2e2e2e" stroke="#9db4d4" stroke-width="1.200"/><circle cx="444" cy="269.5" r="3.300" fill="#2e2e2e" stroke="#d6a828" stroke-width="1.200"/><circle cx="444" cy="292" r="3.300" fill="#2e2e2e" stroke="#c6c6c6" stroke-width="1.200"/><circle cx="247.5" cy="359.5" r="3.800" fill="#9bd6b3"/><circle cx="265.5" cy="359.5" r="3.800" fill="#6c9bd0"/><circle cx="283.5" cy="359.5" r="3.800" fill="#cf93c2"/><circle cx="301.5" cy="359.5" r="3.300" fill="#2e2e2e" stroke="#9db4d4" stroke-width="1.200"/><circle cx="319.5" cy="359.5" r="3.300" fill="#2e2e2e" stroke="#c6c6c6" stroke-width="1.200"/><circle cx="337.5" cy="359.5" r="3.800" fill="#d2d2d2"/><circle cx="382.5" cy="359.5" r="3.800" fill="#9bd6b3"/><circle cx="400.5" cy="359.5" r="3.800" fill="#6c9bd0"/><circle cx="418.5" cy="359.5" r="3.800" fill="#cf93c2"/><circle cx="436.5" cy="359.5" r="3.300" fill="#2e2e2e" stroke="#9db4d4" stroke-width="1.200"/><circle cx="454.5" cy="359.5" r="3.300" fill="#2e2e2e" stroke="#c6c6c6" stroke-width="1.200"/><circle cx="472.5" cy="359.5" r="3.800" fill="#d2d2d2"/><circle cx="292.5" cy="382" r="3.300" fill="#2e2e2e" stroke="#9bd6b3" stroke-width="1.200"/><circle cx="427.5" cy="382" r="3.300" fill="#2e2e2e" stroke="#9bd6b3" stroke-width="1.200"/><circle cx="342" cy="449.5" r="3.300" fill="#2e2e2e" stroke="#9bd6b3" stroke-width="1.200"/><circle cx="360" cy="449.5" r="3.800" fill="#9bd6b3"/><circle cx="378" cy="449.5" r="3.300" fill="#2e2e2e" stroke="#9bd6b3" stroke-width="1.200"/><circle cx="396" cy="449.5" r="3.300" fill="#2e2e2e" stroke="#9bd6b3" stroke-width="1.200"/><circle cx="414" cy="449.5" r="3.300" fill="#2e2e2e" stroke="#c6c6c6" stroke-width="1.200"/><circle cx="432" cy="449.5" r="3.800" fill="#9bd6b3"/><circle cx="450" cy="449.5" r="3.800" fill="#cf93c2"/><circle cx="468" cy="449.5" r="3.800" fill="#6c9bd0"/><circle cx="486" cy="449.5" r="3.300" fill="#2e2e2e" stroke="#9bd6b3" stroke-width="1.200"/><circle cx="504" cy="449.5" r="3.300" fill="#2e2e2e" stroke="#d2c78c" stroke-width="1.200"/><circle cx="522" cy="449.5" r="3.300" fill="#2e2e2e" stroke="#c6c6c6" stroke-width="1.200"/><circle cx="540" cy="449.5" r="3.800" fill="#cf93c2"/><circle cx="441" cy="472" r="3.300" fill="#2e2e2e" stroke="#d2c78c" stroke-width="1.200"/><circle cx="441" cy="540" r="3.300" fill="#2e2e2e" stroke="#d2c78c" stroke-width="1.200"/><circle cx="605" cy="540" r="3.800" fill="#d2c78c"/></svg>
<div class="a" style="left:814px;top:163.5px;width:3.4px;height:668px;background:#000;"></div>
<div class="a" style="left:817.4px;top:163.2px;width:343.6px;height:17.3px;background:#3e3e3e;"></div>
<div class="a" style="left:820.5px;top:166.5px;width:10px;height:10px;background:#2a2a2a;border-radius:2px;"></div>
<span class="t" style="left:833.5px;top:164.76px;font-size:10.5px;line-height:14.5px;color:#e6e6e6;transform:scaleX(0.949);">Node inspector</span>
<div class="a" style="left:817.5px;top:180.5px;width:343.5px;height:650.5px;background:#242424;"></div>
<div class="a" style="left:844px;top:180.5px;width:299.5px;height:19.5px;background:#3c3c3c;border-radius:4px 4px 0 0;"></div>
<div class="a" style="left:851px;top:199.5px;width:293px;height:618.5px;background:#373737;border-radius:0 0 5px 3px;"></div>
<div class="a" style="left:874.5px;top:202px;width:265.7px;height:612.5px;background:#434343;border-radius:3px 3px 5px 3px;box-shadow:-1px 0 0 #2e2e2e;"></div>
<div class="a" style="left:1144px;top:180.5px;width:17px;height:650.5px;background:#242424;"></div>
<div class="a" style="left:873.5px;top:507.3px;width:268px;height:2.2px;background:#2c2c2c;"></div>
<svg class="a" style="left:822px;top:184.5px" width="15" height="14"><rect x="0.600" y="0.600" width="9" height="7" rx="1" fill="#3a3a3a" stroke="#e8e8e8" stroke-width="1.200"/><rect x="0.600" y="0.600" width="9" height="2.400" fill="#e8e8e8"/><rect x="4.200" y="5.600" width="9.500" height="7.500" rx="1" fill="#c8c8c8" stroke="#f0f0f0" stroke-width="1.200"/><rect x="4.200" y="5.600" width="9.500" height="2.400" fill="#f4f4f4"/></svg>
<svg class="a" style="left:822px;top:207.500px" width="14" height="9"><rect x="0.600" y="0.600" width="8.500" height="2.600" rx="1.300" fill="none" stroke="#e8e8e8" stroke-width="1.200"/><rect x="3" y="4.800" width="10" height="2.600" rx="1.300" fill="none" stroke="#e8e8e8" stroke-width="1.200"/></svg>
<div class="a" style="left:844.7px;top:181px;width:20.5px;height:18px;background:linear-gradient(#9c9c9c,#808080);border-radius:4.5px;"></div>
<span class="t" style="left:875.2px;top:182.96px;font-size:10.5px;line-height:14.5px;color:#e6e6e6;transform:scaleX(0.929);">elephant: Skin, TailTip, Tusks</span>
<div class="a" style="left:1011.3px;top:183.4px;width:92.3px;height:11.7px;background:linear-gradient(#2b2b2b,#1d1d1d);border-radius:2.5px;box-shadow:0 0 0 1px #1e1e1e,0 1px 0 1px #666;"></div><span class="t" style="left:1015.5px;top:182.01px;font-size:10.5px;line-height:14.5px;color:#e6e6e6;transform:scaleX(0.902);">Node graph</span><svg class="a" style="left:1096.3px;top:189.95px" width="7" height="5"><path d="M0.500 0H6.100L3.300 4.300Z" fill="#e4e4e4"/></svg>
<div class="a" style="left:1109.5px;top:182.6px;width:13.3px;height:13.5px;background:#fff;border-radius:2px;"></div>
<div class="a" style="left:1128.3px;top:183.4px;width:11.7px;height:11.7px;background:linear-gradient(#2c2c2c,#1e1e1e);border-radius:2.500px;box-shadow:0 0 0 1px #1e1e1e,0 1px 0 1px #666;"></div>
<svg class="a" style="left:1129px;top:185.300px" width="11" height="8"><path d="M0.500 1H10.500" stroke="#e8e8e8" stroke-width="1.200"/><circle cx="3" cy="5" r="1.600" fill="none" stroke="#e8e8e8" stroke-width="1.100"/><circle cx="8" cy="5" r="1.600" fill="none" stroke="#e8e8e8" stroke-width="1.100"/></svg>
<div class="a" style="left:868.6px;top:203.8px;width:271.5px;height:18.4px;background:linear-gradient(#4a4a4a,#404040);border-radius:4px;"></div><div class="a" style="left:868.8px;top:203.8px;width:19.7px;height:18.4px;background:linear-gradient(#aaa690,#96927c);border-radius:4.500px;box-shadow:0 0 0 1px #5a5848;"></div><svg class="a" style="left:868.8px;top:203.8px" width="20" height="19"><defs><radialGradient id="s1" cx=".4" cy=".32" r=".75"><stop offset="0" stop-color="#fff"/><stop offset=".55" stop-color="#cfd2d8"/><stop offset="1" stop-color="#8a8e98"/></radialGradient></defs><circle cx="10" cy="9.200" r="6.800" fill="url(#s1)" stroke="#3a3a3a" stroke-width=".9"/></svg><svg class="a" style="left:892.4px;top:210.2px" width="7" height="6"><path d="M0 0H6.400L3.200 5.800Z" fill="#e6e6e6"/></svg><span class="t" style="left:908.2px;top:205.96px;font-size:10.5px;line-height:14.5px;color:#e6e6e6;transform:scaleX(0.866);">Material Out:Diffuse Material</span>
<div class="a" style="left:1025.3px;top:207.3px;width:93px;height:11.8px;background:linear-gradient(#2b2b2b,#1d1d1d);border-radius:2.5px;box-shadow:0 0 0 1px #1e1e1e,0 1px 0 1px #666;"></div><span class="t" style="left:1029.5px;top:205.96px;font-size:10.5px;line-height:14.5px;color:#e6e6e6;transform:scaleX(0.969);">Diffuse</span><svg class="a" style="left:1111px;top:213.9px" width="7" height="5"><path d="M0.500 0H6.100L3.300 4.300Z" fill="#e4e4e4"/></svg>
<div class="a" style="left:1124.5px;top:207.7px;width:12px;height:11px;background:linear-gradient(#2c2c2c,#1e1e1e);border-radius:2.500px;box-shadow:0 0 0 1px #1e1e1e,0 1px 0 1px #666;"></div><svg class="a" style="left:1125.5px;top:209.7px" width="10" height="7"><path d="M0.300 3.500Q5 -1.500 9.700 3.500Q5 8.500 0.300 3.500Z" fill="#ececec"/><circle cx="5" cy="3.500" r="1.700" fill="#222"/></svg>
<div class="a" style="left:891.5px;top:226.8px;width:245.5px;height:18.6px;background:linear-gradient(#5c5c5c,#4a4a4a);border-radius:6px;box-shadow:0 0 0 1px #252525,0 1px 0 1px #5a5a5a;"></div><div class="a" style="left:891.5px;top:226.8px;width:19.6px;height:18.6px;background:linear-gradient(#9bb5a9,#7b978b);border-radius:6px 0 0 6px;box-shadow:1px 0 0 #2c2c2c;"></div><svg class="a" style="left:891.500px;top:226.2px" width="20" height="20" viewBox="1 0.600 17.400 17.400"><path d="M3 6L6.500 2.500H14.500V15.500H3Z" fill="#f6f6f6"/><path d="M3 6H6.500V2.500Z" fill="#999"/><circle cx="11.500" cy="5.800" r="1.300" fill="#d83a20"/><circle cx="6.800" cy="8.800" r="2" fill="#b83018"/><circle cx="11.300" cy="12" r="2.200" fill="#d83a20"/></svg><svg class="a" style="left:915.700px;top:232.8px" width="7" height="7"><path d="M0 0V6.600L6.400 3.300Z" fill="#e6e6e6"/></svg><span class="t" style="left:931.7px;top:228.81px;font-size:10.5px;line-height:14.5px;color:#e6e6e6;transform:scaleX(0.905);">Diffuse: RGB image</span><div class="a" style="left:1040px;top:230.3px;width:93px;height:11.6px;background:linear-gradient(#2b2b2b,#1d1d1d);border-radius:2.5px;box-shadow:0 0 0 1px #1e1e1e,0 1px 0 1px #666;"></div><span class="t" style="left:1044.2px;top:228.86px;font-size:10.5px;line-height:14.5px;color:#e6e6e6;transform:scaleX(0.838);">RGB image</span><svg class="a" style="left:1125.7px;top:236.8px" width="7" height="5"><path d="M0.500 0H6.100L3.300 4.300Z" fill="#e4e4e4"/></svg>
<div class="a" style="left:891.5px;top:250.23px;width:245.5px;height:18.6px;background:linear-gradient(#5c5c5c,#4a4a4a);border-radius:6px;box-shadow:0 0 0 1px #252525,0 1px 0 1px #5a5a5a;"></div><div class="a" style="left:891.5px;top:250.23px;width:19.6px;height:18.6px;background:linear-gradient(#9bb5a9,#7b978b);border-radius:6px 0 0 6px;box-shadow:1px 0 0 #2c2c2c;"></div><svg class="a" style="left:891.500px;top:249.63px" width="20" height="20" viewBox="1 0.600 17.400 17.400"><defs><linearGradient id="fg" x1="0" y1="0" x2="0" y2="1"><stop offset="0" stop-color="#000"/><stop offset=".35" stop-color="#222"/><stop offset="1" stop-color="#fff"/></linearGradient></defs><path d="M3 6L6.500 2.500H14.500V15.500H3Z" fill="#f6f6f6"/><path d="M3 6H6.500V2.500Z" fill="#999"/><path d="M5 7L7.500 4.500H13V13.800H5Z" fill="url(#fg)"/></svg><svg class="a" style="left:915.700px;top:256.23px" width="7" height="7"><path d="M0 0V6.600L6.400 3.300Z" fill="#e6e6e6"/></svg><span class="t" style="left:931.7px;top:252.24px;font-size:10.5px;line-height:14.5px;color:#e6e6e6;transform:scaleX(0.865);">Roughness:</span><div class="a" style="left:1010.4px;top:253.73px;width:122.7px;height:11.6px;background:linear-gradient(#2b2b2b,#1c1c1c);border-radius:2.500px;box-shadow:0 0 0 1px #1e1e1e,0 1px 0 1px #666;"></div><svg class="a" style="left:1013.800px;top:256.53px" width="6" height="6"><path d="M5.400 0V6L0 3Z" fill="#ececec"/></svg><svg class="a" style="left:1124.300px;top:256.53px" width="6" height="6"><path d="M0 0V6L5.400 3Z" fill="#ececec"/></svg><span class="t" style="left:1059.8px;top:252.69px;font-size:10.5px;line-height:14.5px;color:#f0f0f0;transform:scaleX(0.898);">0.000</span>
<div class="a" style="left:891.5px;top:273.66px;width:245.5px;height:18.6px;background:linear-gradient(#5c5c5c,#4a4a4a);border-radius:6px;box-shadow:0 0 0 1px #252525,0 1px 0 1px #5a5a5a;"></div><div class="a" style="left:891.5px;top:273.66px;width:19.6px;height:18.6px;background:linear-gradient(#9bb5a9,#7b978b);border-radius:6px 0 0 6px;box-shadow:1px 0 0 #2c2c2c;"></div><svg class="a" style="left:891.500px;top:273.06px" width="20" height="20" viewBox="1 0.600 17.400 17.400"><path d="M3 6L6.500 2.500H14.500V15.500H3Z" fill="#f6f6f6"/><path d="M3 6H6.500V2.500Z" fill="#999"/><circle cx="11.500" cy="5.800" r="1.300" fill="#111"/><circle cx="6.800" cy="8.800" r="2" fill="#111"/><circle cx="11.300" cy="12" r="2.200" fill="#111"/><circle cx="6.300" cy="13" r="1" fill="#111"/></svg><svg class="a" style="left:915.700px;top:279.66px" width="7" height="7"><path d="M0 0V6.600L6.400 3.300Z" fill="#e6e6e6"/></svg><span class="t" style="left:931.7px;top:275.67px;font-size:10.5px;line-height:14.5px;color:#e6e6e6;transform:scaleX(0.906);">Bump: Greyscale image</span><div class="a" style="left:1040px;top:277.16px;width:93px;height:11.6px;background:linear-gradient(#2b2b2b,#1d1d1d);border-radius:2.5px;box-shadow:0 0 0 1px #1e1e1e,0 1px 0 1px #666;"></div><span class="t" style="left:1044.2px;top:275.72px;font-size:10.5px;line-height:14.5px;color:#e6e6e6;transform:scaleX(0.889);">Greyscale image</span><svg class="a" style="left:1125.7px;top:283.66px" width="7" height="5"><path d="M0.500 0H6.100L3.300 4.300Z" fill="#e4e4e4"/></svg>
<div class="a" style="left:891.5px;top:297.09px;width:245.5px;height:18.6px;background:linear-gradient(#5c5c5c,#4a4a4a);border-radius:6px;box-shadow:0 0 0 1px #252525,0 1px 0 1px #5a5a5a;"></div><div class="a" style="left:891.5px;top:297.09px;width:19.6px;height:18.6px;background:linear-gradient(#9bb5a9,#7b978b);border-radius:6px 0 0 6px;box-shadow:1px 0 0 #2c2c2c;"></div><span class="t" style="left:931.7px;top:299.1px;font-size:10.5px;line-height:14.5px;color:#e6e6e6;transform:scaleX(0.901);">Normal</span><div class="a" style="left:1040px;top:300.59px;width:93px;height:11.6px;background:linear-gradient(#2b2b2b,#1d1d1d);border-radius:2.5px;box-shadow:0 0 0 1px #1e1e1e,0 1px 0 1px #666;"></div><span class="t" style="left:1041.5px;top:299.15px;font-size:10.5px;line-height:14.5px;color:#6e6e6e;transform:scaleX(0.907);">No node</span><svg class="a" style="left:1125.7px;top:307.09px" width="7" height="5"><path d="M0.500 0H6.100L3.300 4.300Z" fill="#e4e4e4"/></svg>
<div class="a" style="left:891.5px;top:320.52px;width:245.5px;height:18.6px;background:linear-gradient(#5c5c5c,#4a4a4a);border-radius:6px;box-shadow:0 0 0 1px #252525,0 1px 0 1px #5a5a5a;"></div><div class="a" style="left:891.5px;top:320.52px;width:19.6px;height:18.6px;background:linear-gradient(#a6a6a6,#8a8a8a);border-radius:6px 0 0 6px;box-shadow:1px 0 0 #2c2c2c;"></div><span class="t" style="left:931.7px;top:322.53px;font-size:10.5px;line-height:14.5px;color:#e6e6e6;transform:scaleX(0.904);">Displacement</span><div class="a" style="left:1040px;top:324.02px;width:93px;height:11.6px;background:linear-gradient(#2b2b2b,#1d1d1d);border-radius:2.5px;box-shadow:0 0 0 1px #1e1e1e,0 1px 0 1px #666;"></div><span class="t" style="left:1041.5px;top:322.58px;font-size:10.5px;line-height:14.5px;color:#6e6e6e;transform:scaleX(0.907);">No node</span><svg class="a" style="left:1125.7px;top:330.52px" width="7" height="5"><path d="M0.500 0H6.100L3.300 4.300Z" fill="#e4e4e4"/></svg>
<div class="a" style="left:891.5px;top:343.95px;width:245.5px;height:18.6px;background:linear-gradient(#5c5c5c,#4a4a4a);border-radius:6px;box-shadow:0 0 0 1px #252525,0 1px 0 1px #5a5a5a;"></div><div class="a" style="left:891.5px;top:343.95px;width:19.6px;height:18.6px;background:linear-gradient(#9bb5a9,#7b978b);border-radius:6px 0 0 6px;box-shadow:1px 0 0 #2c2c2c;"></div><svg class="a" style="left:891.500px;top:343.35px" width="20" height="20" viewBox="1 0.600 17.400 17.400"><defs><linearGradient id="fg" x1="0" y1="0" x2="0" y2="1"><stop offset="0" stop-color="#000"/><stop offset=".35" stop-color="#222"/><stop offset="1" stop-color="#fff"/></linearGradient></defs><path d="M3 6L6.500 2.500H14.500V15.500H3Z" fill="#f6f6f6"/><path d="M3 6H6.500V2.500Z" fill="#999"/><path d="M5 7L7.500 4.500H13V13.800H5Z" fill="url(#fg)"/></svg><svg class="a" style="left:915.700px;top:349.95px" width="7" height="7"><path d="M0 0V6.600L6.400 3.300Z" fill="#e6e6e6"/></svg><span class="t" style="left:931.7px;top:345.96px;font-size:10.5px;line-height:14.5px;color:#e6e6e6;transform:scaleX(0.904);">Opacity:</span><div class="a" style="left:1010.4px;top:347.45px;width:122.7px;height:11.6px;background:linear-gradient(#2b2b2b,#1c1c1c);border-radius:2.500px;box-shadow:0 0 0 1px #1e1e1e,0 1px 0 1px #666;"></div><svg class="a" style="left:1013.800px;top:350.25px" width="6" height="6"><path d="M5.400 0V6L0 3Z" fill="#ececec"/></svg><svg class="a" style="left:1124.300px;top:350.25px" width="6" height="6"><path d="M0 0V6L5.400 3Z" fill="#ececec"/></svg><span class="t" style="left:1059.8px;top:346.41px;font-size:10.5px;line-height:14.5px;color:#f0f0f0;transform:scaleX(0.898);">1.000</span>
<div class="a" style="left:891.5px;top:367.38px;width:245.5px;height:18.6px;background:linear-gradient(#5c5c5c,#4a4a4a);border-radius:6px;box-shadow:0 0 0 1px #252525,0 1px 0 1px #5a5a5a;"></div><div class="a" style="left:891.5px;top:367.38px;width:19.6px;height:18.6px;background:linear-gradient(#a48ca4,#88728a);border-radius:6px 0 0 6px;box-shadow:1px 0 0 #2c2c2c;"></div><div class="a" style="left:893.3px;top:369.08px;width:16.6px;height:15.2px;background:#38383c;border-radius:4px 2.500px 2.500px 4px;"></div><svg class="a" style="left:891.500px;top:366.78px" width="20" height="20" viewBox="1 0.600 17.400 17.400"><rect x="3.500" y="3.500" width="11" height="11" rx="1.500" fill="none" stroke="#c89ac8" stroke-width="1"/><path d="M4.500 9H8M10 9H13.500M8 6V12M10 6V12" stroke="#e0a8e0" stroke-width="1.200" fill="none"/></svg><svg class="a" style="left:915.700px;top:373.38px" width="7" height="7"><path d="M0 0V6.600L6.400 3.300Z" fill="#e6e6e6"/></svg><span class="t" style="left:931.7px;top:369.39px;font-size:10.5px;line-height:14.5px;color:#e6e6e6;transform:scaleX(0.908);">Smooth:</span><div class="a" style="left:1010.4px;top:370.88px;width:11.6px;height:11.6px;background:linear-gradient(#2e2e2e,#202020);border-radius:2.500px;box-shadow:0 0 0 1px #303030,0 1px 0 1px #5c5c5c;"></div><svg class="a" style="left:1010.500px;top:370.68px" width="12" height="12"><path d="M1.500 6.500L4.500 10.300L10.800 1.300" stroke="#fff" stroke-width="1.800" fill="none"/></svg>
<div class="a" style="left:891.5px;top:390.81px;width:245.5px;height:18.6px;background:linear-gradient(#5c5c5c,#4a4a4a);border-radius:6px;box-shadow:0 0 0 1px #252525,0 1px 0 1px #5a5a5a;"></div><div class="a" style="left:891.5px;top:390.81px;width:19.6px;height:18.6px;background:linear-gradient(#7186a2,#5b6d89);border-radius:6px 0 0 6px;box-shadow:1px 0 0 #2c2c2c;"></div><div class="a" style="left:893.3px;top:392.51px;width:16.6px;height:15.2px;background:#38383c;border-radius:4px 2.500px 2.500px 4px;"></div><svg class="a" style="left:891.500px;top:390.21px" width="20" height="20" viewBox="1 0.600 17.400 17.400"><rect x="3.500" y="3.500" width="11" height="11" rx="1.500" fill="none" stroke="#8aa0c0" stroke-width="1"/><path d="M4.500 12H7.500L10.500 6.500H13.500" stroke="#f4f4f4" stroke-width="1.400" fill="none"/></svg><svg class="a" style="left:915.700px;top:396.81px" width="7" height="7"><path d="M0 0V6.600L6.400 3.300Z" fill="#e6e6e6"/></svg><span class="t" style="left:931.7px;top:392.82px;font-size:10.5px;line-height:14.5px;color:#e6e6e6;transform:scaleX(0.681);">Rounded edges radius:</span><div class="a" style="left:1010.4px;top:394.31px;width:122.7px;height:11.6px;background:linear-gradient(#2b2b2b,#1c1c1c);border-radius:2.500px;box-shadow:0 0 0 1px #1e1e1e,0 1px 0 1px #666;"></div><svg class="a" style="left:1013.800px;top:397.11px" width="6" height="6"><path d="M5.400 0V6L0 3Z" fill="#ececec"/></svg><svg class="a" style="left:1124.300px;top:397.11px" width="6" height="6"><path d="M0 0V6L5.400 3Z" fill="#ececec"/></svg><span class="t" style="left:1056.85px;top:393.27px;font-size:10.5px;line-height:14.5px;color:#f0f0f0;transform:scaleX(0.918);">0.0000</span>
<div class="a" style="left:891.5px;top:414.24px;width:245.5px;height:18.6px;background:linear-gradient(#5c5c5c,#4a4a4a);border-radius:6px;box-shadow:0 0 0 1px #252525,0 1px 0 1px #5a5a5a;"></div><div class="a" style="left:891.5px;top:414.24px;width:19.6px;height:18.6px;background:linear-gradient(#9bb5a9,#7b978b);border-radius:6px 0 0 6px;box-shadow:1px 0 0 #2c2c2c;"></div><span class="t" style="left:931.7px;top:416.25px;font-size:10.5px;line-height:14.5px;color:#e6e6e6;transform:scaleX(0.894);">Transmission</span><div class="a" style="left:1040px;top:417.74px;width:93px;height:11.6px;background:linear-gradient(#2b2b2b,#1d1d1d);border-radius:2.5px;box-shadow:0 0 0 1px #1e1e1e,0 1px 0 1px #666;"></div><span class="t" style="left:1041.5px;top:416.3px;font-size:10.5px;line-height:14.5px;color:#6e6e6e;transform:scaleX(0.907);">No node</span><svg class="a" style="left:1125.7px;top:424.24px" width="7" height="5"><path d="M0.500 0H6.100L3.300 4.300Z" fill="#e4e4e4"/></svg>
<div class="a" style="left:891.5px;top:437.67px;width:245.5px;height:18.6px;background:linear-gradient(#5c5c5c,#4a4a4a);border-radius:6px;box-shadow:0 0 0 1px #252525,0 1px 0 1px #5a5a5a;"></div><div class="a" style="left:891.5px;top:437.67px;width:19.6px;height:18.6px;background:linear-gradient(#b4b09a,#9a967e);border-radius:6px 0 0 6px;box-shadow:1px 0 0 #2c2c2c;"></div><span class="t" style="left:931.7px;top:439.68px;font-size:10.5px;line-height:14.5px;color:#e6e6e6;transform:scaleX(0.894);">Medium</span><div class="a" style="left:1040px;top:441.17px;width:93px;height:11.6px;background:linear-gradient(#2b2b2b,#1d1d1d);border-radius:2.5px;box-shadow:0 0 0 1px #1e1e1e,0 1px 0 1px #666;"></div><span class="t" style="left:1041.5px;top:439.73px;font-size:10.5px;line-height:14.5px;color:#6e6e6e;transform:scaleX(0.907);">No node</span><svg class="a" style="left:1125.7px;top:447.67px" width="7" height="5"><path d="M0.500 0H6.100L3.300 4.300Z" fill="#e4e4e4"/></svg>
<div class="a" style="left:891.5px;top:461.1px;width:245.5px;height:18.6px;background:linear-gradient(#5c5c5c,#4a4a4a);border-radius:6px;box-shadow:0 0 0 1px #252525,0 1px 0 1px #5a5a5a;"></div><div class="a" style="left:891.5px;top:461.1px;width:19.6px;height:18.6px;background:linear-gradient(#a6a6a6,#8a8a8a);border-radius:6px 0 0 6px;box-shadow:1px 0 0 #2c2c2c;"></div><span class="t" style="left:931.7px;top:463.11px;font-size:10.5px;line-height:14.5px;color:#e6e6e6;transform:scaleX(0.880);">Emission</span><div class="a" style="left:1040px;top:464.6px;width:93px;height:11.6px;background:linear-gradient(#2b2b2b,#1d1d1d);border-radius:2.5px;box-shadow:0 0 0 1px #1e1e1e,0 1px 0 1px #666;"></div><span class="t" style="left:1041.5px;top:463.16px;font-size:10.5px;line-height:14.5px;color:#6e6e6e;transform:scaleX(0.907);">No node</span><svg class="a" style="left:1125.7px;top:471.1px" width="7" height="5"><path d="M0.500 0H6.100L3.300 4.300Z" fill="#e4e4e4"/></svg>
<div class="a" style="left:891.5px;top:484.53px;width:245.5px;height:18.6px;background:linear-gradient(#5c5c5c,#4a4a4a);border-radius:6px;box-shadow:0 0 0 1px #252525,0 1px 0 1px #5a5a5a;"></div><div class="a" style="left:891.5px;top:484.53px;width:19.6px;height:18.6px;background:linear-gradient(#a48ca4,#88728a);border-radius:6px 0 0 6px;box-shadow:1px 0 0 #2c2c2c;"></div><div class="a" style="left:893.3px;top:486.23px;width:16.6px;height:15.2px;background:#38383c;border-radius:4px 2.500px 2.500px 4px;"></div><svg class="a" style="left:891.500px;top:483.93px" width="20" height="20" viewBox="1 0.600 17.400 17.400"><rect x="3.500" y="3.500" width="11" height="11" rx="1.500" fill="none" stroke="#c89ac8" stroke-width="1"/><path d="M4.500 9H8M10 9H13.500M8 6V12M10 6V12" stroke="#e0a8e0" stroke-width="1.200" fill="none"/></svg><svg class="a" style="left:915.700px;top:490.53px" width="7" height="7"><path d="M0 0V6.600L6.400 3.300Z" fill="#e6e6e6"/></svg><span class="t" style="left:931.7px;top:486.54px;font-size:10.5px;line-height:14.5px;color:#e6e6e6;transform:scaleX(0.895);">Shadow catcher:</span><div class="a" style="left:1010.4px;top:488.03px;width:11.6px;height:11.6px;background:linear-gradient(#2e2e2e,#202020);border-radius:2.500px;box-shadow:0 0 0 1px #303030,0 1px 0 1px #5c5c5c;"></div>
<div class="a" style="left:868.6px;top:511.3px;width:271.5px;height:18.4px;background:linear-gradient(#4a4a4a,#404040);border-radius:4px;"></div><div class="a" style="left:868.8px;top:511.3px;width:19.7px;height:18.4px;background:linear-gradient(#aaa690,#96927c);border-radius:4.500px;box-shadow:0 0 0 1px #5a5848;"></div><svg class="a" style="left:868.8px;top:511.3px" width="20" height="19"><defs><radialGradient id="s2" cx=".4" cy=".32" r=".75"><stop offset="0" stop-color="#fff"/><stop offset=".55" stop-color="#cfd2d8"/><stop offset="1" stop-color="#8a8e98"/></radialGradient></defs><circle cx="10" cy="9.200" r="6.800" fill="url(#s2)" stroke="#3a3a3a" stroke-width=".9"/></svg><svg class="a" style="left:892.4px;top:517.7px" width="7" height="6"><path d="M0 0H6.400L3.200 5.800Z" fill="#e6e6e6"/></svg><span class="t" style="left:908.2px;top:513.46px;font-size:10.5px;line-height:14.5px;color:#e6e6e6;transform:scaleX(0.886);">Plain Color</span>
<div class="a" style="left:1025.3px;top:514.8px;width:93px;height:11.8px;background:linear-gradient(#2b2b2b,#1d1d1d);border-radius:2.5px;box-shadow:0 0 0 1px #1e1e1e,0 1px 0 1px #666;"></div><span class="t" style="left:1029.5px;top:513.46px;font-size:10.5px;line-height:14.5px;color:#e6e6e6;transform:scaleX(0.969);">Diffuse</span><svg class="a" style="left:1111px;top:521.4px" width="7" height="5"><path d="M0.500 0H6.100L3.300 4.300Z" fill="#e4e4e4"/></svg>
<div class="a" style="left:1124.5px;top:515.2px;width:12px;height:11px;background:linear-gradient(#2c2c2c,#1e1e1e);border-radius:2.500px;box-shadow:0 0 0 1px #1e1e1e,0 1px 0 1px #666;"></div><svg class="a" style="left:1125.5px;top:517.2px" width="10" height="7"><path d="M0.300 3.500Q5 -1.500 9.700 3.500Q5 8.500 0.300 3.500Z" fill="#ececec"/><circle cx="5" cy="3.500" r="1.700" fill="#222"/></svg>
<div class="a" style="left:891.5px;top:534.8px;width:245.5px;height:18.6px;background:linear-gradient(#5c5c5c,#4a4a4a);border-radius:6px;box-shadow:0 0 0 1px #252525,0 1px 0 1px #5a5a5a;"></div><div class="a" style="left:891.5px;top:534.8px;width:19.6px;height:18.6px;background:linear-gradient(#9bb5a9,#7b978b);border-radius:6px 0 0 6px;box-shadow:1px 0 0 #2c2c2c;"></div><svg class="a" style="left:891.500px;top:534.2px" width="20" height="20" viewBox="1 0.600 17.400 17.400"><defs><linearGradient id="cg" x1="0" y1="0" x2="1" y2="1"><stop offset="0" stop-color="#3a8ae0"/><stop offset=".4" stop-color="#58c060"/><stop offset=".7" stop-color="#e8d040"/><stop offset="1" stop-color="#e84a30"/></linearGradient></defs><path d="M3 6L6.500 2.500H14.500V15.500H3Z" fill="#f6f6f6"/><path d="M3 6H6.500V2.500Z" fill="#999"/><path d="M5 7L7.500 4.500H13V13.800H5Z" fill="url(#cg)"/></svg><svg class="a" style="left:915.700px;top:540.8px" width="7" height="7"><path d="M0 0V6.600L6.400 3.300Z" fill="#e6e6e6"/></svg><span class="t" style="left:931.7px;top:536.81px;font-size:10.5px;line-height:14.5px;color:#e6e6e6;transform:scaleX(0.918);">Diffuse:</span><div class="a" style="left:1009.4px;top:537.3px;width:124.7px;height:13.6px;background:#a8a42c;border-radius:2px;box-shadow:0 0 0 1px #3a3a2a;"></div>
<div class="a" style="left:891.5px;top:558.23px;width:245.5px;height:18.6px;background:linear-gradient(#5c5c5c,#4a4a4a);border-radius:6px;box-shadow:0 0 0 1px #252525,0 1px 0 1px #5a5a5a;"></div><div class="a" style="left:891.5px;top:558.23px;width:19.6px;height:18.6px;background:linear-gradient(#9bb5a9,#7b978b);border-radius:6px 0 0 6px;box-shadow:1px 0 0 #2c2c2c;"></div><span class="t" style="left:931.7px;top:560.24px;font-size:10.5px;line-height:14.5px;color:#e6e6e6;transform:scaleX(0.875);">Roughness</span><div class="a" style="left:1040px;top:561.73px;width:93px;height:11.6px;background:linear-gradient(#2b2b2b,#1d1d1d);border-radius:2.5px;box-shadow:0 0 0 1px #1e1e1e,0 1px 0 1px #666;"></div><span class="t" style="left:1041.5px;top:560.29px;font-size:10.5px;line-height:14.5px;color:#6e6e6e;transform:scaleX(0.907);">No node</span><svg class="a" style="left:1125.7px;top:568.23px" width="7" height="5"><path d="M0.500 0H6.100L3.300 4.300Z" fill="#e4e4e4"/></svg>
<div class="a" style="left:891.5px;top:581.66px;width:245.5px;height:18.6px;background:linear-gradient(#5c5c5c,#4a4a4a);border-radius:6px;box-shadow:0 0 0 1px #252525,0 1px 0 1px #5a5a5a;"></div><div class="a" style="left:891.5px;top:581.66px;width:19.6px;height:18.6px;background:linear-gradient(#9bb5a9,#7b978b);border-radius:6px 0 0 6px;box-shadow:1px 0 0 #2c2c2c;"></div><span class="t" style="left:931.7px;top:583.67px;font-size:10.5px;line-height:14.5px;color:#e6e6e6;transform:scaleX(0.893);">Bump</span><div class="a" style="left:1040px;top:585.16px;width:93px;height:11.6px;background:linear-gradient(#2b2b2b,#1d1d1d);border-radius:2.5px;box-shadow:0 0 0 1px #1e1e1e,0 1px 0 1px #666;"></div><span class="t" style="left:1041.5px;top:583.72px;font-size:10.5px;line-height:14.5px;color:#6e6e6e;transform:scaleX(0.907);">No node</span><svg class="a" style="left:1125.7px;top:591.66px" width="7" height="5"><path d="M0.500 0H6.100L3.300 4.300Z" fill="#e4e4e4"/></svg>
<div class="a" style="left:891.5px;top:605.09px;width:245.5px;height:18.6px;background:linear-gradient(#5c5c5c,#4a4a4a);border-radius:6px;box-shadow:0 0 0 1px #252525,0 1px 0 1px #5a5a5a;"></div><div class="a" style="left:891.5px;top:605.09px;width:19.6px;height:18.6px;background:linear-gradient(#9bb5a9,#7b978b);border-radius:6px 0 0 6px;box-shadow:1px 0 0 #2c2c2c;"></div><span class="t" style="left:931.7px;top:607.1px;font-size:10.5px;line-height:14.5px;color:#e6e6e6;transform:scaleX(0.901);">Normal</span><div class="a" style="left:1040px;top:608.59px;width:93px;height:11.6px;background:linear-gradient(#2b2b2b,#1d1d1d);border-radius:2.5px;box-shadow:0 0 0 1px #1e1e1e,0 1px 0 1px #666;"></div><span class="t" style="left:1041.5px;top:607.15px;font-size:10.5px;line-height:14.5px;color:#6e6e6e;transform:scaleX(0.907);">No node</span><svg class="a" style="left:1125.7px;top:615.09px" width="7" height="5"><path d="M0.500 0H6.100L3.300 4.300Z" fill="#e4e4e4"/></svg>
<div class="a" style="left:891.5px;top:628.52px;width:245.5px;height:18.6px;background:linear-gradient(#5c5c5c,#4a4a4a);border-radius:6px;box-shadow:0 0 0 1px #252525,0 1px 0 1px #5a5a5a;"></div><div class="a" style="left:891.5px;top:628.52px;width:19.6px;height:18.6px;background:linear-gradient(#a6a6a6,#8a8a8a);border-radius:6px 0 0 6px;box-shadow:1px 0 0 #2c2c2c;"></div><span class="t" style="left:931.7px;top:630.53px;font-size:10.5px;line-height:14.5px;color:#e6e6e6;transform:scaleX(0.904);">Displacement</span><div class="a" style="left:1040px;top:632.02px;width:93px;height:11.6px;background:linear-gradient(#2b2b2b,#1d1d1d);border-radius:2.5px;box-shadow:0 0 0 1px #1e1e1e,0 1px 0 1px #666;"></div><span class="t" style="left:1041.5px;top:630.58px;font-size:10.5px;line-height:14.5px;color:#6e6e6e;transform:scaleX(0.907);">No node</span><svg class="a" style="left:1125.7px;top:638.52px" width="7" height="5"><path d="M0.500 0H6.100L3.300 4.300Z" fill="#e4e4e4"/></svg>
<div class="a" style="left:891.5px;top:651.95px;width:245.5px;height:18.6px;background:linear-gradient(#5c5c5c,#4a4a4a);border-radius:6px;box-shadow:0 0 0 1px #252525,0 1px 0 1px #5a5a5a;"></div><div class="a" style="left:891.5px;top:651.95px;width:19.6px;height:18.6px;background:linear-gradient(#9bb5a9,#7b978b);border-radius:6px 0 0 6px;box-shadow:1px 0 0 #2c2c2c;"></div><span class="t" style="left:931.7px;top:653.96px;font-size:10.5px;line-height:14.5px;color:#e6e6e6;transform:scaleX(0.899);">Opacity</span><div class="a" style="left:1040px;top:655.45px;width:93px;height:11.6px;background:linear-gradient(#2b2b2b,#1d1d1d);border-radius:2.5px;box-shadow:0 0 0 1px #1e1e1e,0 1px 0 1px #666;"></div><span class="t" style="left:1041.5px;top:654.01px;font-size:10.5px;line-height:14.5px;color:#6e6e6e;transform:scaleX(0.907);">No node</span><svg class="a" style="left:1125.7px;top:661.95px" width="7" height="5"><path d="M0.500 0H6.100L3.300 4.300Z" fill="#e4e4e4"/></svg>
<div class="a" style="left:891.5px;top:675.38px;width:245.5px;height:18.6px;background:linear-gradient(#5c5c5c,#4a4a4a);border-radius:6px;box-shadow:0 0 0 1px #252525,0 1px 0 1px #5a5a5a;"></div><div class="a" style="left:891.5px;top:675.38px;width:19.6px;height:18.6px;background:linear-gradient(#a48ca4,#88728a);border-radius:6px 0 0 6px;box-shadow:1px 0 0 #2c2c2c;"></div><div class="a" style="left:893.3px;top:677.08px;width:16.6px;height:15.2px;background:#38383c;border-radius:4px 2.500px 2.500px 4px;"></div><svg class="a" style="left:891.500px;top:674.78px" width="20" height="20" viewBox="1 0.600 17.400 17.400"><rect x="3.500" y="3.500" width="11" height="11" rx="1.500" fill="none" stroke="#c89ac8" stroke-width="1"/><path d="M4.500 9H8M10 9H13.500M8 6V12M10 6V12" stroke="#e0a8e0" stroke-width="1.200" fill="none"/></svg><svg class="a" style="left:915.700px;top:681.38px" width="7" height="7"><path d="M0 0V6.600L6.400 3.300Z" fill="#e6e6e6"/></svg><span class="t" style="left:931.7px;top:677.39px;font-size:10.5px;line-height:14.5px;color:#e6e6e6;transform:scaleX(0.908);">Smooth:</span><div class="a" style="left:1010.4px;top:678.88px;width:11.6px;height:11.6px;background:linear-gradient(#2e2e2e,#202020);border-radius:2.500px;box-shadow:0 0 0 1px #303030,0 1px 0 1px #5c5c5c;"></div><svg class="a" style="left:1010.500px;top:678.68px" width="12" height="12"><path d="M1.500 6.500L4.500 10.300L10.800 1.300" stroke="#fff" stroke-width="1.800" fill="none"/></svg>
<div class="a" style="left:891.5px;top:698.81px;width:245.5px;height:18.6px;background:linear-gradient(#5c5c5c,#4a4a4a);border-radius:6px;box-shadow:0 0 0 1px #252525,0 1px 0 1px #5a5a5a;"></div><div class="a" style="left:891.5px;top:698.81px;width:19.6px;height:18.6px;background:linear-gradient(#7186a2,#5b6d89);border-radius:6px 0 0 6px;box-shadow:1px 0 0 #2c2c2c;"></div><span class="t" style="left:931.7px;top:700.82px;font-size:10.5px;line-height:14.5px;color:#e6e6e6;transform:scaleX(0.899);">Rounded edges radius</span><div class="a" style="left:1040px;top:702.31px;width:93px;height:11.6px;background:linear-gradient(#2b2b2b,#1d1d1d);border-radius:2.5px;box-shadow:0 0 0 1px #1e1e1e,0 1px 0 1px #666;"></div><span class="t" style="left:1041.5px;top:700.87px;font-size:10.5px;line-height:14.5px;color:#6e6e6e;transform:scaleX(0.907);">No node</span><svg class="a" style="left:1125.7px;top:708.81px" width="7" height="5"><path d="M0.500 0H6.100L3.300 4.300Z" fill="#e4e4e4"/></svg>
<div class="a" style="left:891.5px;top:722.24px;width:245.5px;height:18.6px;background:linear-gradient(#5c5c5c,#4a4a4a);border-radius:6px;box-shadow:0 0 0 1px #252525,0 1px 0 1px #5a5a5a;"></div><div class="a" style="left:891.5px;top:722.24px;width:19.6px;height:18.6px;background:linear-gradient(#9bb5a9,#7b978b);border-radius:6px 0 0 6px;box-shadow:1px 0 0 #2c2c2c;"></div><span class="t" style="left:931.7px;top:724.25px;font-size:10.5px;line-height:14.5px;color:#e6e6e6;transform:scaleX(0.894);">Transmission</span><div class="a" style="left:1040px;top:725.74px;width:93px;height:11.6px;background:linear-gradient(#2b2b2b,#1d1d1d);border-radius:2.5px;box-shadow:0 0 0 1px #1e1e1e,0 1px 0 1px #666;"></div><span class="t" style="left:1041.5px;top:724.3px;font-size:10.5px;line-height:14.5px;color:#6e6e6e;transform:scaleX(0.907);">No node</span><svg class="a" style="left:1125.7px;top:732.24px" width="7" height="5"><path d="M0.500 0H6.100L3.300 4.300Z" fill="#e4e4e4"/></svg>
<div class="a" style="left:891.5px;top:745.67px;width:245.5px;height:18.6px;background:linear-gradient(#5c5c5c,#4a4a4a);border-radius:6px;box-shadow:0 0 0 1px #252525,0 1px 0 1px #5a5a5a;"></div><div class="a" style="left:891.5px;top:745.67px;width:19.6px;height:18.6px;background:linear-gradient(#b4b09a,#9a967e);border-radius:6px 0 0 6px;box-shadow:1px 0 0 #2c2c2c;"></div><span class="t" style="left:931.7px;top:747.68px;font-size:10.5px;line-height:14.5px;color:#e6e6e6;transform:scaleX(0.894);">Medium</span><div class="a" style="left:1040px;top:749.17px;width:93px;height:11.6px;background:linear-gradient(#2b2b2b,#1d1d1d);border-radius:2.5px;box-shadow:0 0 0 1px #1e1e1e,0 1px 0 1px #666;"></div><span class="t" style="left:1041.5px;top:747.73px;font-size:10.5px;line-height:14.5px;color:#6e6e6e;transform:scaleX(0.907);">No node</span><svg class="a" style="left:1125.7px;top:755.67px" width="7" height="5"><path d="M0.500 0H6.100L3.300 4.300Z" fill="#e4e4e4"/></svg>
<div class="a" style="left:891.5px;top:769.1px;width:245.5px;height:18.6px;background:linear-gradient(#5c5c5c,#4a4a4a);border-radius:6px;box-shadow:0 0 0 1px #252525,0 1px 0 1px #5a5a5a;"></div><div class="a" style="left:891.5px;top:769.1px;width:19.6px;height:18.6px;background:linear-gradient(#a6a6a6,#8a8a8a);border-radius:6px 0 0 6px;box-shadow:1px 0 0 #2c2c2c;"></div><span class="t" style="left:931.7px;top:771.11px;font-size:10.5px;line-height:14.5px;color:#e6e6e6;transform:scaleX(0.880);">Emission</span><div class="a" style="left:1040px;top:772.6px;width:93px;height:11.6px;background:linear-gradient(#2b2b2b,#1d1d1d);border-radius:2.5px;box-shadow:0 0 0 1px #1e1e1e,0 1px 0 1px #666;"></div><span class="t" style="left:1041.5px;top:771.16px;font-size:10.5px;line-height:14.5px;color:#6e6e6e;transform:scaleX(0.907);">No node</span><svg class="a" style="left:1125.7px;top:779.1px" width="7" height="5"><path d="M0.500 0H6.100L3.300 4.300Z" fill="#e4e4e4"/></svg>
<div class="a" style="left:891.5px;top:792.53px;width:245.5px;height:18.6px;background:linear-gradient(#5c5c5c,#4a4a4a);border-radius:6px;box-shadow:0 0 0 1px #252525,0 1px 0 1px #5a5a5a;"></div><div class="a" style="left:891.5px;top:792.53px;width:19.6px;height:18.6px;background:linear-gradient(#a48ca4,#88728a);border-radius:6px 0 0 6px;box-shadow:1px 0 0 #2c2c2c;"></div><span class="t" style="left:931.7px;top:794.54px;font-size:10.5px;line-height:14.5px;color:#e6e6e6;transform:scaleX(0.896);">Shadow catcher</span><div class="a" style="left:1040px;top:796.03px;width:93px;height:11.6px;background:linear-gradient(#2b2b2b,#1d1d1d);border-radius:2.5px;box-shadow:0 0 0 1px #1e1e1e,0 1px 0 1px #666;"></div><span class="t" style="left:1041.5px;top:794.59px;font-size:10.5px;line-height:14.5px;color:#6e6e6e;transform:scaleX(0.907);">No node</span><svg class="a" style="left:1125.7px;top:802.53px" width="7" height="5"><path d="M0.500 0H6.100L3.300 4.300Z" fill="#e4e4e4"/></svg>
<div class="a" style="left:1194px;top:18px;width:594px;height:554px;background:#3c3c3e;"></div>
<div class="a" style="left:1194px;top:18px;width:594px;height:27.5px;background:#fff;"></div>
<svg class="a" style="left:1201px;top:23.500px" width="16" height="16" viewBox="0 0 16 16"><circle cx="8" cy="7.800" r="7.300" fill="#0c2038"/><path d="M8 1A6.800 6.800 0 0 1 14.800 7.800A6.800 6.800 0 0 1 11 13.900A5 5 0 0 0 13 9A5 5 0 0 0 8 4.200A3.600 3.600 0 0 0 4.500 7.800" fill="none" stroke="#18b4e8" stroke-width="1.600"/><circle cx="7.600" cy="9.300" r="2.300" fill="none" stroke="#18b4e8" stroke-width="1.400"/><path d="M3 4.500L5 3.500M2.500 11L4 12.500" stroke="#0e78b0" stroke-width="1.200"/></svg>
<span class="t" style="left:1220.7px;top:24.04px;font-size:12px;line-height:16px;color:#787878;transform:scaleX(0.868);">Octane IPR Preview Window</span>
<svg class="a" style="left:1675px;top:20px" width="110" height="24"><g stroke="#666" stroke-width="1" fill="none"><path d="M5.500 11.500H14.500"/><rect x="46.500" y="6.500" width="8.500" height="8.500"/><path d="M87 7L96 16M96 7L87 16"/></g></svg>
<div class="a" style="left:1200px;top:52px;width:43px;height:15px;background:#57575b;border-radius:3px;box-shadow:0 0 0 1px #333335;"></div><span class="t" style="left:1205.2px;top:52.27px;font-size:11px;line-height:15px;color:#d6d6d6;transform:scaleX(0.861);">Reload</span>
<div class="a" style="left:1245.2px;top:52px;width:42.8px;height:15px;background:#57575b;border-radius:3px;box-shadow:0 0 0 1px #333335;"></div><span class="t" style="left:1250.4px;top:52.27px;font-size:11px;line-height:15px;color:#d6d6d6;transform:scaleX(0.836);">Pause</span>
<div class="a" style="left:1290.2px;top:52px;width:42.8px;height:15px;background:#57575b;border-radius:3px;box-shadow:0 0 0 1px #333335;"></div><span class="t" style="left:1295.2px;top:52.27px;font-size:11px;line-height:15px;color:#d6d6d6;transform:scaleX(0.857);">Redraw</span>
<div class="a" style="left:1335.4px;top:52px;width:42.6px;height:15px;background:#57575b;border-radius:3px;box-shadow:0 0 0 1px #333335;"></div><span class="t" style="left:1340px;top:52.27px;font-size:11px;line-height:15px;color:#d6d6d6;transform:scaleX(0.863);">Reset</span>
<div class="a" style="left:1384px;top:52px;width:43.5px;height:15px;background:#57575b;border-radius:3px;box-shadow:0 0 0 1px #333335;"></div><span class="t" style="left:1389.5px;top:52.27px;font-size:11px;line-height:15px;color:#d6d6d6;transform:scaleX(0.844);">Store</span>
<div class="a" style="left:1429.5px;top:52px;width:43px;height:15px;background:#57575b;border-radius:3px;box-shadow:0 0 0 1px #333335;"></div><svg class="a" style="left:1460.6px;top:57.1px" width="9" height="6"><path d="M0 0H8.600L4.300 5.400Z" fill="#e8e8e8"/></svg>
<div class="a" style="left:1474.7px;top:52px;width:41.8px;height:15px;background:#57575b;border-radius:3px;box-shadow:0 0 0 1px #333335;"></div><span class="t" style="left:1478.8px;top:52.27px;font-size:11px;line-height:15px;color:#d6d6d6;transform:scaleX(0.849);">Clone</span>
<div class="a" style="left:1519.5px;top:52px;width:50px;height:15px;background:#57575b;border-radius:3px;box-shadow:0 0 0 1px #333335;"></div><span class="t" style="left:1524.7px;top:52.27px;font-size:11px;line-height:15px;color:#d6d6d6;transform:scaleX(0.839);">Save ...</span><svg class="a" style="left:1557.6px;top:57.1px" width="9" height="6"><path d="M0 0H8.600L4.300 5.400Z" fill="#e8e8e8"/></svg>
<div class="a" style="left:1579px;top:52px;width:70px;height:15px;background:#57575b;border-radius:3px;box-shadow:0 0 0 1px #333335;"></div><span class="t" style="left:1583.7px;top:52.27px;font-size:11px;line-height:15px;color:#d6d6d6;transform:scaleX(0.870);">SceneFoc...</span><svg class="a" style="left:1637.1px;top:57.1px" width="9" height="6"><path d="M0 0H8.600L4.300 5.400Z" fill="#e8e8e8"/></svg>
<div class="a" style="left:1655px;top:52px;width:70px;height:15px;background:#57575b;border-radius:3px;box-shadow:0 0 0 1px #333335;"></div><span class="t" style="left:1659.6px;top:52.27px;font-size:11px;line-height:15px;color:#d6d6d6;transform:scaleX(0.828);">Camera</span><svg class="a" style="left:1713.1px;top:57.1px" width="9" height="6"><path d="M0 0H8.600L4.300 5.400Z" fill="#e8e8e8"/></svg>
<div class="a" style="left:1732px;top:52px;width:47px;height:15px;background:#57575b;border-radius:3px;box-shadow:0 0 0 1px #333335;"></div><span class="t" style="left:1736.2px;top:52.27px;font-size:11px;line-height:15px;color:#d6d6d6;transform:scaleX(0.853);">Close</span>
<div class="a" style="left:1200px;top:72px;width:43px;height:15px;background:#57575b;border-radius:3px;box-shadow:0 0 0 1px #333335;"></div><span class="t" style="left:1204px;top:72.27px;font-size:11px;line-height:15px;color:#d6d6d6;transform:scaleX(0.835);">Sel Only</span>
<div class="a" style="left:1245.2px;top:72px;width:42.8px;height:15px;background:#57575b;border-radius:3px;box-shadow:0 0 0 1px #333335;"></div><span class="t" style="left:1248.3px;top:72.27px;font-size:11px;line-height:15px;color:#d6d6d6;transform:scaleX(0.818);">Full Up...</span>
<div class="a" style="left:1290.2px;top:72px;width:42.8px;height:15px;background:#57575b;border-radius:3px;box-shadow:0 0 0 1px #333335;"></div><span class="t" style="left:1293px;top:72.27px;font-size:11px;line-height:15px;color:#d6d6d6;transform:scaleX(0.877);">No Upd.</span>
<div class="a" style="left:1335.4px;top:72px;width:42.6px;height:15px;background:#57575b;border-radius:3px;box-shadow:0 0 0 1px #333335;"></div><span class="t" style="left:1338.3px;top:72.27px;font-size:11px;line-height:15px;color:#d6d6d6;transform:scaleX(0.875);">Mat Upd</span>
<div class="a" style="left:1384px;top:72px;width:43.5px;height:15px;background:#57575b;border-radius:3px;box-shadow:0 0 0 1px #333335;"></div><span class="t" style="left:1389.5px;top:72.27px;font-size:11px;line-height:15px;color:#d6d6d6;transform:scaleX(0.835);">Alpha</span>
<div class="a" style="left:1429.5px;top:72px;width:43px;height:15px;background:#57575b;border-radius:3px;box-shadow:0 0 0 1px #333335;"></div><span class="t" style="left:1432.5px;top:72.27px;font-size:11px;line-height:15px;color:#d6d6d6;transform:scaleX(0.879);">Half Res</span>
<div class="a" style="left:1474.7px;top:72px;width:41.8px;height:15px;background:#57575b;border-radius:3px;box-shadow:0 0 0 1px #333335;"></div><span class="t" style="left:1479.5px;top:72.27px;font-size:11px;line-height:15px;color:#d6d6d6;transform:scaleX(0.861);">Sh.Ball</span>
<div class="a" style="left:1519.5px;top:72px;width:52px;height:15px;background:#57575b;border-radius:3px;box-shadow:0 0 0 1px #333335;"></div><span class="t" style="left:1524.3px;top:72.27px;font-size:11px;line-height:15px;color:#d6d6d6;transform:scaleX(0.882);">HDRLS</span>
<div class="a" style="left:1579px;top:72px;width:70px;height:15px;background:#57575b;border-radius:3px;box-shadow:0 0 0 1px #333335;"></div><span class="t" style="left:1583.7px;top:72.27px;font-size:11px;line-height:15px;color:#d6d6d6;transform:scaleX(0.855);">Beauty</span><svg class="a" style="left:1637.1px;top:77.1px" width="9" height="6"><path d="M0 0H8.600L4.300 5.400Z" fill="#e8e8e8"/></svg>
<div class="a" style="left:1655px;top:72px;width:70px;height:15px;background:#57575b;border-radius:3px;box-shadow:0 0 0 1px #333335;"></div><span class="t" style="left:1659.6px;top:72.27px;font-size:11px;line-height:15px;color:#d6d6d6;transform:scaleX(0.836);">(all layers)</span><svg class="a" style="left:1713.1px;top:77.1px" width="9" height="6"><path d="M0 0H8.600L4.300 5.400Z" fill="#e8e8e8"/></svg>
<div class="a" style="left:1732px;top:72px;width:47px;height:15px;background:#57575b;border-radius:3px;box-shadow:0 0 0 1px #333335;"></div><span class="t" style="left:1736.2px;top:72.27px;font-size:11px;line-height:15px;color:#d6d6d6;transform:scaleX(0.824);">Clay ...</span><svg class="a" style="left:1767.1px;top:77.1px" width="9" height="6"><path d="M0 0H8.600L4.300 5.400Z" fill="#e8e8e8"/></svg>
<div class="a" style="left:1200px;top:91.7px;width:43px;height:15px;background:#57575b;border-radius:3px;box-shadow:0 0 0 1px #333335;"></div><span class="t" style="left:1205.2px;top:91.97px;font-size:11px;line-height:15px;color:#d6d6d6;transform:scaleX(0.813);">Fix Asp.</span>
<div class="a" style="left:1245.2px;top:91.7px;width:42.8px;height:15px;background:#57575b;border-radius:3px;box-shadow:0 0 0 1px #333335;"></div><span class="t" style="left:1250.4px;top:91.97px;font-size:11px;line-height:15px;color:#d6d6d6;transform:scaleX(0.849);">Region</span>
<div class="a" style="left:1384px;top:91.7px;width:43.5px;height:15px;background:#57575b;border-radius:3px;box-shadow:0 0 0 1px #333335;"></div><span class="t" style="left:1389.5px;top:91.97px;font-size:11px;line-height:15px;color:#d6d6d6;transform:scaleX(0.845);">Stats</span>
<div class="a" style="left:1745px;top:91.7px;width:16px;height:15px;background:#4a6c98;border-radius:3px;box-shadow:0 0 0 1px #333335;"></div><span class="t" style="left:1750.5px;top:91.97px;font-size:11px;line-height:15px;color:#e8eef8;transform:scaleX(0.898);">1</span>
<div class="a" style="left:1763px;top:91.7px;width:15.5px;height:15px;background:#4a6c98;border-radius:3px;box-shadow:0 0 0 1px #333335;"></div><span class="t" style="left:1767.8px;top:91.97px;font-size:11px;line-height:15px;color:#e8eef8;transform:scaleX(1.012);">0</span>
<div class="a" style="left:1198px;top:113.5px;width:585px;height:4.5px;background:#c4302a;"></div>
<div class="a" style="left:1198px;top:117.5px;width:585px;height:16.5px;background:#44430f;"></div>
<span class="t" style="left:1202.3px;top:118.22px;font-size:11px;line-height:15px;color:#9c9c88;transform:scaleX(0.888);">IPR Info:</span>
<span class="t" style="left:1247.8px;top:118.22px;font-size:11px;line-height:15px;color:#f4f4f4;transform:scaleX(0.844);">Samples: 1000 (100%)</span>
<span class="t" style="left:1347.2px;top:119.22px;font-size:11px;line-height:15px;color:#f4f4f4;transform:scaleX(0.794);">*</span>
<span class="t" style="left:1356.7px;top:118.22px;font-size:11px;line-height:15px;color:#f4f4f4;transform:scaleX(0.907);">MS/Sec: 0.00</span>
<span class="t" style="left:1422.4px;top:119.22px;font-size:11px;line-height:15px;color:#f4f4f4;transform:scaleX(0.794);">*</span>
<span class="t" style="left:1431.3px;top:118.22px;font-size:11px;line-height:15px;color:#f4f4f4;transform:scaleX(0.881);">R.Time: 00:00:02</span>
<span class="t" style="left:1510.6px;top:119.22px;font-size:11px;line-height:15px;color:#f4f4f4;transform:scaleX(0.794);">*</span>
<span class="t" style="left:1519.4px;top:118.22px;font-size:11px;line-height:15px;color:#f4f4f4;transform:scaleX(0.869);">Resolution: 650x487</span>
<span class="t" style="left:1612.2px;top:119.22px;font-size:11px;line-height:15px;color:#f4f4f4;transform:scaleX(0.794);">*</span>
<span class="t" style="left:1621.4px;top:118.22px;font-size:11px;line-height:15px;color:#f4f4f4;transform:scaleX(0.892);">Mem. Used/Free: 335/1308</span>
<svg class="a" style="left:1196px;top:137px" width="585.5" height="434.5" viewBox="0 0 585.5 434.5">
<defs>
<linearGradient id="sky" x1="0" y1="0" x2="0" y2="1">
<stop offset="0" stop-color="#5996d6"/><stop offset=".2" stop-color="#69a2da"/><stop offset=".35" stop-color="#85b4e2"/><stop offset=".45" stop-color="#aecdea"/><stop offset=".51" stop-color="#d4dfea"/><stop offset=".56" stop-color="#e8e8e9"/><stop offset=".8" stop-color="#e3e3e3"/><stop offset=".95" stop-color="#dedede"/><stop offset="1" stop-color="#d6d6d6"/></linearGradient>
<radialGradient id="shade" cx=".47" cy=".40" r=".62"><stop offset="0" stop-color="#fff" stop-opacity=".06"/><stop offset=".7" stop-color="#000" stop-opacity="0"/><stop offset="1" stop-color="#000" stop-opacity=".22"/></radialGradient>
<radialGradient id="vig" cx=".5" cy=".5" r=".75"><stop offset=".55" stop-color="#000" stop-opacity="0"/><stop offset="1" stop-color="#000" stop-opacity=".09"/></radialGradient>
<clipPath id="sc"><circle cx="293" cy="219" r="116"/></clipPath>
<filter id="tex" x="0" y="0" width="100%" height="100%" color-interpolation-filters="sRGB">
<feTurbulence type="fractalNoise" baseFrequency="0.35 0.07" numOctaves="3" seed="11" result="n"/>
<feColorMatrix in="n" type="matrix" values="0.55 0 0 0 0.66  0.55 0 0 0 0.66  0.55 0 0 0 0.66  0 0 0 0 1" result="g"/>
<feGaussianBlur in="SourceGraphic" stdDeviation="1" result="b"/>
<feBlend in="g" in2="b" mode="multiply" result="m"/>
<feComposite in="m" in2="b" operator="in"/>
</filter>
</defs>
<rect width="585.5" height="434.5" fill="url(#sky)"/>
<rect width="585.5" height="434.5" fill="url(#vig)"/>
<g clip-path="url(#sc)">
<circle cx="293" cy="219" r="117" fill="#eceef3"/>
<path d="M263.900 254.500L281 254.500L281 282.700L290 279.600L323.600 279.600L327.500 309L264.700 309Z" fill="#cdcfd8"/>
<path d="M263.900 226L281 229L281 254.500L263.900 254.500Z" fill="#e2e4ec"/>
<g filter="url(#tex)">
<path d="M170 182L190.300 175.200L203.600 187.700L201.300 217L206 256.100L215.400 282.700L221.600 304.600L215 314L170 300Z" fill="#8c7a64"/>
<path d="M230.200 131.400L263.900 129.100L270.100 148.600L277.900 170.500L276.400 178.400L271.700 190.900L267 206.500L267 217L270.100 229.500L263.900 248.300L262.300 268.600L265.400 290.500L264.700 308.500L221.600 308.500L221.600 304.600L215.400 282.700L206 256.100L201.300 217L203.600 187.700Z" fill="#a3876a"/>
<path d="M254.500 111.900L270 106L293 102L310 103.500L323.600 107.200L336.900 126.700L336.900 131L254.500 131L258.400 123.600Z" fill="#917a60"/>
<path d="M263.900 128.500L358.800 128.300L365.100 143.900L371.400 154.900L377.600 175.200L382.300 197.100L383.900 222.200L357.300 226.500L344.800 227.800L329.100 226.800L313.500 226L290 225.600L282.600 227L282.600 178.400L277.900 170.500L270.100 148.600Z" fill="#6b5843"/>
<path d="M358.800 130.600L371.400 134.500L385.400 151.800L383.900 155.700L371.400 154.900L365.100 143.900Z" fill="#8a745c"/>
<path d="M381.500 170.500L391.700 164.300L399.500 178.400L405.800 197.100L409 219L406.600 232.600L402.600 248.300L398 262.400L398 248.300L393.300 229.500L391.700 219L385.400 203.400L383.900 184.600Z" fill="#a08a70"/>
<path d="M281 229.500L290 228.700L313.500 235.800L329.100 238.900L344.800 232.600L357.300 228L371.400 229.500L376 248.300L375.300 263.900L371.400 279.600L365.100 290.500L357.300 285.800L343.200 277.500L329.100 272.500L310.300 274.100L290 279.600L281 282.700Z" fill="#7f6a53"/>
<path d="M323.600 279.600L333.800 275.700L343.200 279.600L357.300 287.500L365.100 290.500L358.800 304.600L355.700 308.500L327.500 308.500Z" fill="#76614a"/>
</g>
<path d="M329.100 273.600L343.200 278.600L357.300 286.800" stroke="#e8e8ee" stroke-width="1.200" fill="none" opacity=".75"/>
<g opacity=".9"><path d="M263.900 310.900L281 311.500L281.500 324L266 322.500ZM283.500 312.500L309 312L309.500 325L284 326ZM311.100 312.400L338.500 310.900L336.900 318.700L321.300 326.500L311.100 325Z" fill="#cfc09a"/></g>
<path d="M222.500 307A113.500 113.500 0 0 0 352 316" stroke="#cfc690" stroke-width="2.400" fill="none" opacity=".8"/>
<circle cx="293" cy="219" r="117" fill="url(#shade)"/>
</g>
</svg>
<div class="a" style="left:1196px;top:570.7px;width:585.5px;height:1px;background:#f4f4f4;"></div>
<div class="a" style="left:1780.6px;top:137px;width:1px;height:434.5px;background:#eeeeee;opacity:.8;"></div>
</body></html>
